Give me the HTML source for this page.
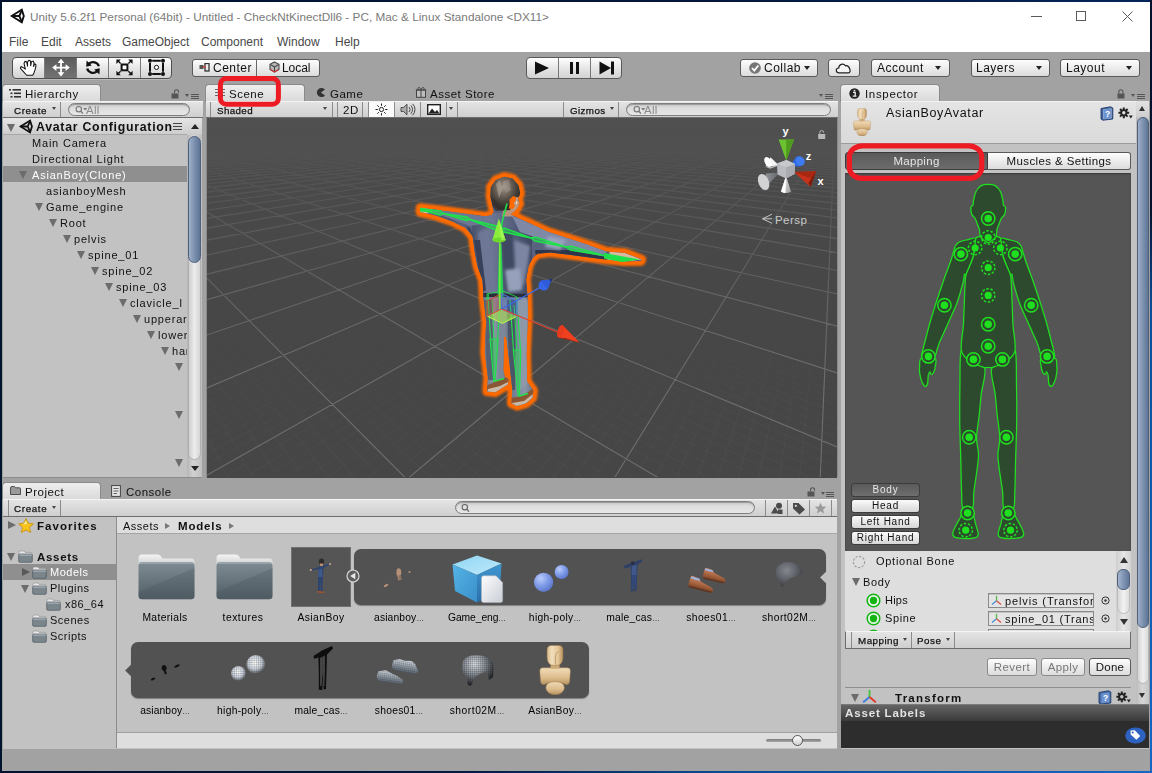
<!DOCTYPE html>
<html>
<head>
<meta charset="utf-8">
<title>Unity</title>
<style>
*{box-sizing:border-box;margin:0;padding:0}
html,body{width:1152px;height:773px;overflow:hidden}
body{font-family:"Liberation Sans",sans-serif;font-size:12px;color:#111;background:linear-gradient(90deg,#02122f 0%,#03183d 40%,#0d4a99 80%,#1666c4 100%);position:relative}
.abs{position:absolute}
.t{position:absolute;white-space:nowrap;line-height:14px;letter-spacing:0.55px}
#win{position:absolute;left:0;top:0;width:1152px;height:773px;background:#a2a2a2;overflow:hidden}
#titlebar{position:absolute;left:0;top:0;width:1152px;height:30px;background:#fff}
#menubar{position:absolute;left:0;top:30px;width:1152px;height:22px;background:#fff}
.menu{position:absolute;top:35px;font-size:12px;color:#484848;white-space:nowrap}
/* generic unity button */
.btn{position:absolute;border:1px solid #5a5a5a;border-radius:3px;background:linear-gradient(#fdfdfd,#dcdcdc);}
.tab{position:absolute;height:17px;border:1px solid #8a8a8a;border-bottom:none;border-radius:4px 4px 0 0;background:linear-gradient(#eeeeee,#d9d9d9)}
.tbar{position:absolute;height:17px;background:linear-gradient(#e4e4e4,#cfcfcf);border-top:1px solid #f4f4f4;border-bottom:1px solid #6d6d6d}
.panel{position:absolute;background:#c2c2c2}
.vsep{position:absolute;width:1px;background:#8b8b8b;top:0;height:15px}

.tg{position:absolute;left:12px;top:57px;width:160px;height:22px;border:1px solid #4f4f4f;border-radius:4px;background:linear-gradient(#ffffff,#e9e9e9 45%,#d2d2d2);overflow:hidden;box-shadow:0 1px 0 rgba(255,255,255,.25)}
.tg .d{position:absolute;top:0;width:1px;height:20px;background:#7a7a7a}
.tg svg{position:absolute;top:0}
.bt{position:absolute;font-size:12px;letter-spacing:0.5px;white-space:nowrap;line-height:14px;color:#111}
.dd{position:absolute;width:0;height:0;border-left:3px solid transparent;border-right:3px solid transparent;border-top:4px solid #222}

.tabt{position:absolute;font-size:11.5px;letter-spacing:0.5px;white-space:nowrap;line-height:14px;color:#111}
.row{position:absolute;left:0;height:16px;font-size:11px;letter-spacing:0.8px;white-space:nowrap;line-height:18px;color:#111}
.ar{position:absolute;width:0;height:0;border-left:4.5px solid transparent;border-right:4.5px solid transparent;border-top:8px solid #6c6c6c}
.arr{position:absolute;width:0;height:0;border-top:4.5px solid transparent;border-bottom:4.5px solid transparent;border-left:8px solid #6c6c6c}
.lock{position:absolute}
.sfield{position:absolute;height:13px;border-radius:7px;border:1px solid #7e7e7e;background:linear-gradient(#c9c9c9,#dedede 40%,#e6e6e6);box-shadow:inset 0 1px 1px rgba(0,0,0,.25)}
/*PROJCSS*/
.prow{position:absolute;height:16px;font-size:11px;letter-spacing:0.5px;white-space:nowrap;line-height:17px;color:#111}
.lbl{position:absolute;width:78px;text-align:center;font-size:10.3px;letter-spacing:0.95px;white-space:nowrap;line-height:13px;color:#000}
.fold{position:absolute;width:15px;height:13px}
/*/PROJCSS*//*INSPCSS*/
.ibtn{position:absolute;height:18px;border:1px solid #5a5a5a;background:linear-gradient(#fdfdfd,#dcdcdc);font-size:11.5px;line-height:16px;text-align:center;white-space:nowrap;color:#111}
.sbtn{position:absolute;left:851px;width:69px;height:14.3px;border:1px solid #3c3c3c;border-radius:3px;background:linear-gradient(#fbfbfb,#d6d6d6);font-size:10px;line-height:12.5px;text-align:center;white-space:nowrap;color:#111;letter-spacing:.75px}
.irow{position:absolute;font-size:11px;letter-spacing:0.75px;white-space:nowrap;line-height:14px;color:#111}
/*/INSPCSS*//*GRAY*/.bt,.prow,.tabt,.row,.lbl,.irow,.ibtn,.sbtn,#iname{will-change:transform}
</style>
</head>
<body>
<div id="win">
  <div id="titlebar"></div>
  <div id="menubar"></div>


  <!-- TITLE BAR -->
  <svg class="abs" style="left:10px;top:8px" width="16" height="16" viewBox="0 0 16 16"><g fill="none" stroke="#111" stroke-width="1.9" stroke-linejoin="miter"><path d="M1.6 8 L11.8 1.6 L13.8 8 L11.8 14.4 Z"/><path d="M1.6 8 H9.3 M9.3 8 L12 1.8 M9.3 8 L12 14.2"/></g></svg>
  <div class="abs" id="title" style="left:30px;top:9px;font-size:11.75px;color:#7a7a7a;white-space:nowrap;line-height:15px;letter-spacing:0.02px">Unity 5.6.2f1 Personal (64bit) - Untitled - CheckNtKinectDll6 - PC, Mac &amp; Linux Standalone &lt;DX11&gt;</div>
  <div class="abs" style="left:1031px;top:16px;width:11px;height:1px;background:#5a5a5a"></div>
  <div class="abs" style="left:1076px;top:11px;width:10px;height:10px;border:1px solid #5a5a5a"></div>
  <svg class="abs" style="left:1122px;top:11px" width="11" height="11" viewBox="0 0 11 11"><path d="M0.5 0.5 L10.5 10.5 M10.5 0.5 L0.5 10.5" stroke="#5a5a5a" stroke-width="1" fill="none"/></svg>
  <!-- MENU -->
  <div class="menu" id="m1" style="left:9px">File</div>
  <div class="menu" id="m2" style="left:41px">Edit</div>
  <div class="menu" id="m3" style="left:75px">Assets</div>
  <div class="menu" id="m4" style="left:122px">GameObject</div>
  <div class="menu" id="m5" style="left:201px">Component</div>
  <div class="menu" id="m6" style="left:277px">Window</div>
  <div class="menu" id="m7" style="left:335px">Help</div>


  <div id="unity" style="position:absolute;left:0;top:0;width:1152px;height:773px;transform:translateZ(0)">
  <!-- MAIN TOOLBAR -->
  <div class="tg">
    <div class="abs" style="left:32px;top:0;width:32px;height:20px;background:linear-gradient(#5c5c5c,#737373)"></div>
    <div class="d" style="left:31px"></div><div class="d" style="left:63px"></div><div class="d" style="left:95px"></div><div class="d" style="left:127px"></div>
    <!-- hand -->
    <svg style="left:7px" width="18" height="20" viewBox="0 0 18 20"><path d="M6.66 17.27 L3.19 13.36 L0.35 10.32 L1.02 8.59 L3.63 9.89 L5.36 11.19 L4.06 5.55 L4.93 3.38 L6.66 3.81 L7.53 8.15 L7.53 4.25 L8.83 2.25 L10.57 2.94 L10.74 7.72 L11.44 3.81 L13.17 3.12 L14.04 4.68 L13.61 8.59 L14.48 5.98 L15.78 6.24 L15.95 8.15 L15.08 11.63 L14.04 14.66 L12.74 17.27 Z" fill="#fff" stroke="#111" stroke-width="1.05" stroke-linejoin="round"/></svg>
    <!-- move -->
    <svg style="left:39px" width="18" height="20" viewBox="0 0 18 20"><path d="M9 0.8 L12.4 5 H9.9 V8.7 H13.6 V6.2 L17.8 9.6 L13.6 13 V10.5 H9.9 V14.2 H12.4 L9 18.4 L5.6 14.2 H8.1 V10.5 H4.4 V13 L0.2 9.6 L4.4 6.2 V8.7 H8.1 V5 H5.6 Z" fill="#fff"/></svg>
    <!-- rotate -->
    <svg style="left:71px" width="18" height="20" viewBox="0 0 18 20"><g transform="translate(18 0) scale(-1 1)"><g fill="none" stroke="#111" stroke-width="2.3"><path d="M3.2 8.2 A5.9 5.3 0 0 1 13 5.6"/><path d="M14.8 10.6 A5.9 5.3 0 0 1 5 13.4"/></g><path d="M10.2 7.6 L15.4 2.4 L15.8 8.8 Z M7.8 11.4 L2.6 16.6 L2.2 10.2 Z" fill="#111"/></g></svg>
    <!-- scale -->
    <svg style="left:103px" width="18" height="20" viewBox="0 0 18 20"><rect x="5.6" y="6.5" width="5.8" height="5.8" fill="#fff" stroke="#111" stroke-width="2"/><g stroke="#111" stroke-width="1.4" fill="none"><path d="M4.6 5.5 L1.6 2.6 M12.4 5.5 L15.4 2.6 M4.6 13.3 L1.6 16.2 M12.4 13.3 L15.4 16.2"/></g><path d="M0.4 1.6 H4.8 L0.4 6 Z M16.6 1.6 H12.2 L16.6 6 Z M0.4 17.2 H4.8 L0.4 12.8 Z M16.6 17.2 H12.2 L16.6 12.8 Z" fill="#111"/></svg>
    <!-- rect -->
    <svg style="left:135px" width="18" height="20" viewBox="0 0 18 20"><g stroke="#111" stroke-width="2" fill="none"><path d="M4.2 2.8 H12.8 M4.2 16 H12.8 M2 5 V13.8 M15 5 V13.8"/></g><g fill="#111"><circle cx="2" cy="2.8" r="2"/><circle cx="15" cy="2.8" r="2"/><circle cx="2" cy="16" r="2"/><circle cx="15" cy="16" r="2"/></g><circle cx="8.5" cy="9.4" r="2.1" fill="#fff" stroke="#111" stroke-width="1"/></svg>
  </div>
  <!-- Center / Local -->
  <div class="btn" style="left:192px;top:59px;width:128px;height:18px"></div>
  <div class="abs" style="left:256px;top:60px;width:1px;height:16px;background:#666"></div>
  <svg class="abs" style="left:199px;top:63px" width="12" height="9" viewBox="0 0 12 9"><rect x="0.5" y="2" width="4" height="4" fill="#555"/><rect x="6" y="0.5" width="4" height="7.5" fill="none" stroke="#333" stroke-width="1.3"/><path d="M4 4 h3" stroke="#d33" stroke-width="1.2"/></svg>
  <div class="bt" id="bcenter" style="left:213px;top:61px">Center</div>
  <svg class="abs" style="left:268.5px;top:61px" width="11" height="12" viewBox="0 0 13 14"><path d="M6.5 1 L11.8 3.8 V10 L6.5 13 L1.2 10 V3.8 Z" fill="#b8b8b8" stroke="#4a4a4a" stroke-width="1.3"/><path d="M1.5 4 L6.5 6.8 L11.5 4 M6.5 6.8 V12.5" stroke="#444" stroke-width="1.2" fill="none"/><path d="M2 10.2 L6.5 12.8 L11 10.2" stroke="#d33" stroke-width="1.2" fill="none"/></svg>
  <div class="bt" id="blocal" style="left:282.3px;top:61px;letter-spacing:-0.06px">Local</div>
  <!-- Play controls -->
  <div class="btn" style="left:526px;top:57px;width:96px;height:22px;border-radius:4px;background:linear-gradient(#ffffff,#e9e9e9 45%,#d2d2d2)"></div>
  <div class="abs" style="left:558px;top:58px;width:1px;height:20px;background:#777"></div>
  <div class="abs" style="left:590px;top:58px;width:1px;height:20px;background:#777"></div>
  <svg class="abs" style="left:534px;top:61px" width="16" height="14" viewBox="0 0 16 14"><path d="M1 0.5 L15 7 L1 13.5 Z" fill="#111"/></svg>
  <div class="abs" style="left:570px;top:62px;width:3px;height:12px;background:#111"></div>
  <div class="abs" style="left:576px;top:62px;width:3px;height:12px;background:#111"></div>
  <svg class="abs" style="left:599px;top:61px" width="16" height="14" viewBox="0 0 16 14"><path d="M0.5 0.5 L12 7 L0.5 13.5 Z" fill="#111"/><rect x="12" y="0.5" width="3" height="13" fill="#111"/></svg>
  <!-- Right toolbar -->
  <div class="btn" style="left:740px;top:59px;width:78px;height:18px"></div>
  <svg class="abs" style="left:749px;top:62px" width="12" height="12" viewBox="0 0 12 12"><circle cx="6" cy="6" r="5.8" fill="#777"/><path d="M3 6 L5.3 8.5 L9.3 3.5" stroke="#fff" stroke-width="1.8" fill="none"/></svg>
  <div class="bt" id="bcollab" style="left:764px;top:61px">Collab</div>
  <div class="dd" style="left:804px;top:66px"></div>
  <div class="btn" style="left:828px;top:59px;width:32px;height:18px"></div>
  <svg class="abs" style="left:835px;top:62px" width="18" height="12" viewBox="0 0 18 12"><path d="M4.2 10.8 C0.4 10.8 0.4 6 3.8 6 C3.6 2.6 8.2 0.4 10.6 3.8 C14.4 2.8 17 10.8 13.4 10.8 Z" fill="#f4f4f4" stroke="#222" stroke-width="1.2"/></svg>
  <div class="btn" style="left:871px;top:59px;width:79px;height:18px"></div>
  <div class="bt" id="baccount" style="left:877px;top:61px">Account</div>
  <div class="dd" style="left:935px;top:66px"></div>
  <div class="btn" style="left:971px;top:59px;width:79px;height:18px"></div>
  <div class="bt" id="blayers" style="left:976px;top:61px">Layers</div>
  <div class="dd" style="left:1036px;top:66px"></div>
  <div class="btn" style="left:1060px;top:59px;width:80px;height:18px"></div>
  <div class="bt" id="blayout" style="left:1066px;top:61px">Layout</div>
  <div class="dd" style="left:1126px;top:66px"></div>

  <!-- Hierarchy panel -->
  <div class="panel" id="hier" style="left:3px;top:101px;width:199px;height:377px;border-bottom:1px solid #8c8c8c"></div>

  <!-- HIERARCHY TAB -->
  <div class="tab" style="left:2px;top:84px;width:99px;height:18px"></div>
  <svg class="abs" style="left:9px;top:89px" width="12" height="9" viewBox="0 0 12 9"><g fill="#333"><rect x="0" y="0" width="2" height="1.6"/><rect x="3.5" y="0" width="8.5" height="1.6"/><rect x="1.5" y="3.5" width="2" height="1.6"/><rect x="5" y="3.5" width="7" height="1.6"/><rect x="1.5" y="7" width="2" height="1.6"/><rect x="5" y="7" width="7" height="1.6"/></g></svg>
  <div class="tabt" id="thier" style="left:25px;top:87px">Hierarchy</div>
  <svg class="lock" style="left:171px;top:89px" width="9" height="10" viewBox="0 0 9 10"><rect x="0.5" y="4.5" width="7" height="5" fill="#555"/><path d="M3.5 4.5 V2.8 A2 2 0 0 1 7.6 2.8 V3.6" stroke="#555" stroke-width="1.1" fill="none"/></svg>
  <div class="dd" style="left:185px;top:94px;border-top-color:#555;border-left-width:2.5px;border-right-width:2.5px;border-top-width:3px"></div>
  <div class="abs" style="left:191px;top:94px;width:8px;height:5px;border-top:1px solid #555;border-bottom:1px solid #555"><div style="margin-top:1px;height:1px;background:#555"></div></div>
  <div class="abs" id="hierwrap" style="left:3px;top:101px;width:200px;height:376px;overflow:hidden">
    <div class="tbar" style="left:0;top:0;width:200px"></div>
    <div class="bt" style="left:11px;top:2.5px;font-size:9.8px;letter-spacing:0.60px;-webkit-text-stroke:.25px #111">Create</div>
    <div class="dd" style="left:49px;top:6px;border-left-width:2.5px;border-right-width:2.5px;border-top-width:3.5px;border-top-color:#444"></div>
    <div class="vsep" style="left:57px;top:1px"></div>
    <div class="sfield" style="left:65px;top:2px;width:122px"></div>
    <svg class="abs" style="left:72px;top:4px" width="14" height="10" viewBox="0 0 14 10"><circle cx="3.8" cy="4.2" r="2.7" fill="none" stroke="#777" stroke-width="1.1"/><path d="M5.8 6.2 L8 8.6" stroke="#777" stroke-width="1.3"/><path d="M8.2 3 h4 l-2 2.6z" fill="#777"/></svg>
    <div class="bt" style="left:83px;top:1.5px;color:#8a8a8a;font-size:11.5px;letter-spacing:.3px">All</div>
  </div>
  <div class="abs" id="hiertree" style="left:3px;top:0;width:184px;height:477px;overflow:hidden">
    <div class="abs" style="left:0;top:118px;width:184px;height:17px;background:linear-gradient(#e6e6e6,#cdcdcd);border-bottom:1px solid #a9a9a9"></div>
    <div class="ar" style="left:4px;top:124px"></div>
    <svg class="abs" style="left:16px;top:119px" width="15" height="15" viewBox="0 0 16 16"><g fill="none" stroke="#111" stroke-width="1.9" stroke-linejoin="miter"><path d="M1.6 8 L11.8 1.6 L13.8 8 L11.8 14.4 Z"/><path d="M1.6 8 H9.3 M9.3 8 L12 1.8 M9.3 8 L12 14.2"/></g></svg>
    <div class="row" id="hrA" style="left:33px;top:118px;font-weight:bold;font-size:12.3px;letter-spacing:0.75px;width:136px;overflow:hidden">Avatar Configuration</div>
    <div class="abs" style="left:170px;top:123px;width:9px;height:7px;border-top:1px solid #444;border-bottom:1px solid #444"><div style="margin-top:2px;height:1px;background:#444"></div></div>
<div class="row" id="hrow0" style="left:29px;top:134px;">Main Camera</div>
<div class="row" id="hrow1" style="left:29px;top:150px;">Directional Light</div>
<div class="abs" style="left:0;top:166px;width:184px;height:16px;background:#8f8f8f"></div><div class="ar" style="left:16px;top:171px"></div><div class="row" id="hrow2" style="left:29px;top:166px;color:#fff">AsianBoy(Clone)</div>
<div class="row" id="hrow3" style="left:43px;top:182px;">asianboyMesh</div>
<div class="ar" style="left:32px;top:203px"></div><div class="row" id="hrow4" style="left:43px;top:198px;">Game_engine</div>
<div class="ar" style="left:46px;top:219px"></div><div class="row" id="hrow5" style="left:57px;top:214px;">Root</div>
<div class="ar" style="left:60px;top:235px"></div><div class="row" id="hrow6" style="left:71px;top:230px;">pelvis</div>
<div class="ar" style="left:74px;top:251px"></div><div class="row" id="hrow7" style="left:85px;top:246px;">spine_01</div>
<div class="ar" style="left:88px;top:267px"></div><div class="row" id="hrow8" style="left:99px;top:262px;">spine_02</div>
<div class="ar" style="left:102px;top:283px"></div><div class="row" id="hrow9" style="left:113px;top:278px;">spine_03</div>
<div class="ar" style="left:116px;top:299px"></div><div class="row" id="hrow10" style="left:127px;top:294px;">clavicle_l</div>
<div class="ar" style="left:130px;top:315px"></div><div class="row" id="hrow11" style="left:141px;top:310px;">upperarm_l</div>
<div class="ar" style="left:144px;top:331px"></div><div class="row" id="hrow12" style="left:155px;top:326px;">lowerarm_l</div>
<div class="ar" style="left:158px;top:347px"></div><div class="row" id="hrow13" style="left:169px;top:342px;">hand_l</div>
<div class="ar" style="left:172px;top:363px"></div><div class="ar" style="left:172px;top:411px"></div><div class="ar" style="left:172px;top:459px"></div>
  </div>
  <!-- hierarchy scrollbar -->
  <div class="abs" style="left:187px;top:118px;width:15px;height:359px;background:linear-gradient(90deg,#b5b5b5,#d2d2d2 40%,#bfbfbf)"></div>
  <div class="abs" style="left:187px;top:118px;width:15px;height:17px;background:linear-gradient(#e4e4e4,#cbcbcb)"></div>
  <div class="abs" style="left:190.5px;top:123.5px;width:0;height:0;border-left:4px solid transparent;border-right:4px solid transparent;border-bottom:5.5px solid #222"></div>
  <div class="abs" style="left:188px;top:136px;width:13px;height:324px;border-radius:7px;background:linear-gradient(90deg,#cfcfcf,#ececec 50%,#d5d5d5);border:1px solid #b0b0b0"></div>
  <div class="abs" style="left:188px;top:136px;width:13px;height:127px;border-radius:7px;background:linear-gradient(90deg,#9fb0c8,#7f93b1 45%,#5f7595);border:1px solid #4e607c"></div>
  <div class="abs" style="left:190.5px;top:466px;width:0;height:0;border-left:4px solid transparent;border-right:4px solid transparent;border-top:5.5px solid #222"></div>

  <!-- Scene panel -->
  <div class="panel" id="scene" style="left:206px;top:101px;width:632px;height:376px;background:#8a8a8a"></div>
  <div class="abs" id="sv" style="left:207px;top:118px;width:630px;height:359.5px;overflow:hidden;background:#464646">
<!--GRID--><svg class="abs" style="left:0;top:0" width="630" height="359" viewBox="0 0 630 359"><defs><linearGradient id="fog" x1="0" y1="0" x2="0" y2="1"><stop offset="0" stop-color="#505050" stop-opacity="1"/><stop offset="0.045" stop-color="#4f4f4f" stop-opacity="1"/><stop offset="0.12" stop-color="#4c4c4c" stop-opacity=".85"/><stop offset="0.3" stop-color="#494949" stop-opacity=".55"/><stop offset="0.5" stop-color="#474747" stop-opacity=".25"/><stop offset="0.75" stop-color="#464646" stop-opacity="0"/></linearGradient><linearGradient id="mfog" x1="0" y1="0" x2="0" y2="1"><stop offset="0" stop-color="#484848" stop-opacity="1"/><stop offset="0.5" stop-color="#474747" stop-opacity="1"/><stop offset="0.95" stop-color="#464646" stop-opacity="0"/></linearGradient></defs><rect width="630" height="359" fill="#464646"/><path d="M628.3 2.4L1008.8 365.0M628.3 2.4L987.9 365.0M628.3 2.4L967.1 365.0M628.3 2.4L946.3 365.0M628.3 2.4L925.5 365.0M628.3 2.4L904.7 365.0M628.3 2.4L883.9 365.0M628.3 2.4L863.1 365.0M628.3 2.4L842.2 365.0M628.3 2.4L800.6 365.0M628.3 2.4L779.8 365.0M628.3 2.4L758.9 365.0M628.3 2.4L738.1 365.0M628.3 2.4L717.2 365.0M628.3 2.4L696.4 365.0M628.3 2.4L675.6 365.0M628.3 2.4L654.7 365.0M628.3 2.4L633.9 365.0M628.3 2.4L592.1 365.0M628.3 2.4L571.3 365.0M628.3 2.4L550.4 365.0M628.3 2.4L529.6 365.0M628.3 2.4L508.7 365.0M628.3 2.4L487.8 365.0M628.3 2.4L467.0 365.0M628.3 2.4L446.1 365.0M628.3 2.4L425.2 365.0M628.3 2.4L383.4 365.0M628.3 2.4L362.6 365.0M628.3 2.4L341.7 365.0M628.3 2.4L320.8 365.0M628.3 2.4L299.9 365.0M628.3 2.4L279.0 365.0M628.3 2.4L258.1 365.0M628.3 2.4L237.2 365.0M628.3 2.4L216.3 365.0M628.3 2.4L174.5 365.0M628.3 2.4L153.5 365.0M628.3 2.4L132.6 365.0M628.3 2.4L111.7 365.0M628.3 2.4L90.8 365.0M628.3 2.4L69.9 365.0M628.3 2.4L48.9 365.0M628.3 2.4L28.0 365.0M628.3 2.4L7.1 365.0M628.3 2.4L-34.8 365.0M628.3 2.4L-55.7 365.0M628.3 2.4L-76.7 365.0M628.3 2.4L-97.6 365.0M628.3 2.4L-118.6 365.0M628.3 2.4L-139.5 365.0M628.3 2.4L-160.5 365.0M628.3 2.4L-181.4 365.0M628.3 2.4L-202.4 365.0M628.3 2.4L-244.3 365.0M628.3 2.4L-265.3 365.0M628.3 2.4L-286.3 365.0M628.3 2.4L-307.2 365.0M628.3 2.4L-328.2 365.0M628.3 2.4L-349.2 365.0M628.3 2.4L-370.2 365.0M628.3 2.4L-391.1 365.0M628.3 2.4L-412.1 365.0M628.3 2.4L-454.1 365.0M628.3 2.4L-475.1 365.0M628.3 2.4L-496.1 365.0M628.3 2.4L-517.1 365.0M628.3 2.4L-538.1 365.0M628.3 2.4L-559.1 365.0M628.3 2.4L-580.1 365.0M628.3 2.4L-601.1 365.0M628.3 2.4L-622.1 365.0M628.3 2.4L-664.2 365.0M628.3 2.4L-685.2 365.0M628.3 2.4L-706.2 365.0M628.3 2.4L-727.2 365.0M628.3 2.4L-748.3 365.0M628.3 2.4L-769.3 365.0M628.3 2.4L-790.3 365.0M628.3 2.4L-811.4 365.0M628.3 2.4L-832.4 365.0M628.3 2.4L-874.5 365.0M628.3 2.4L-895.6 365.0M628.3 2.4L-916.6 365.0M628.3 2.4L-937.7 365.0M628.3 2.4L-958.7 365.0M628.3 2.4L-979.8 365.0M628.3 2.4L-1000.9 365.0M628.3 2.4L-1021.9 365.0M628.3 2.4L-1043.0 365.0M628.3 2.4L-1085.1 365.0M628.3 2.4L-1106.2 365.0M628.3 2.4L-1127.3 365.0M628.3 2.4L-1148.4 365.0M628.3 2.4L-1169.5 365.0M628.3 2.4L-1190.5 365.0M628.3 2.4L-1211.6 365.0M628.3 2.4L-1232.7 365.0M628.3 2.4L-1253.8 365.0M-157.7 1.5L-2.2 365.0M-157.7 1.5L23.5 365.0M-157.7 1.5L49.3 365.0M-157.7 1.5L75.0 365.0M-157.7 1.5L100.7 365.0M-157.7 1.5L126.4 365.0M-157.7 1.5L152.1 365.0M-157.7 1.5L177.8 365.0M-157.7 1.5L229.2 365.0M-157.7 1.5L254.9 365.0M-157.7 1.5L280.6 365.0M-157.7 1.5L306.3 365.0M-157.7 1.5L332.0 365.0M-157.7 1.5L357.6 365.0M-157.7 1.5L383.3 365.0M-157.7 1.5L409.0 365.0M-157.7 1.5L434.7 365.0M-157.7 1.5L486.0 365.0M-157.7 1.5L511.6 365.0M-157.7 1.5L537.3 365.0M-157.7 1.5L562.9 365.0M-157.7 1.5L588.6 365.0M-157.7 1.5L614.2 365.0M-157.7 1.5L639.8 365.0M-157.7 1.5L665.4 365.0M-157.7 1.5L691.1 365.0M-157.7 1.5L742.3 365.0M-157.7 1.5L767.9 365.0M-157.7 1.5L793.5 365.0M-157.7 1.5L819.1 365.0M-157.7 1.5L844.7 365.0M-157.7 1.5L870.3 365.0M-157.7 1.5L895.9 365.0M-157.7 1.5L921.5 365.0M-157.7 1.5L947.1 365.0M-157.7 1.5L998.2 365.0M-157.7 1.5L1023.8 365.0M-157.7 1.5L1049.4 365.0M-157.7 1.5L1074.9 365.0M-157.7 1.5L1100.5 365.0M-157.7 1.5L1126.1 365.0M-157.7 1.5L1151.6 365.0M-157.7 1.5L1177.1 365.0M-157.7 1.5L1202.7 365.0M-157.7 1.5L1253.8 365.0M-157.7 1.5L1279.3 365.0M-157.7 1.5L1304.8 365.0M-157.7 1.5L1330.3 365.0M-157.7 1.5L1355.9 365.0M-157.7 1.5L1381.4 365.0M-157.7 1.5L1406.9 365.0M-157.7 1.5L1432.4 365.0M-157.7 1.5L1457.9 365.0M-157.7 1.5L1508.9 365.0M-157.7 1.5L1534.4 365.0M-157.7 1.5L1559.9 365.0M-157.7 1.5L1585.3 365.0M-157.7 1.5L1610.8 365.0M-157.7 1.5L1636.3 365.0M-157.7 1.5L1661.8 365.0M-157.7 1.5L1687.2 365.0M-157.7 1.5L1712.7 365.0M-157.7 1.5L1763.6 365.0M-157.7 1.5L1789.0 365.0M-157.7 1.5L1814.5 365.0M-157.7 1.5L1839.9 365.0M-157.7 1.5L1865.4 365.0M-157.7 1.5L1890.8 365.0M-157.7 1.5L1916.2 365.0M-157.7 1.5L1941.7 365.0M-157.7 1.5L1967.1 365.0M-157.7 1.5L2017.9 365.0M-157.7 1.5L2043.3 365.0M-157.7 1.5L2068.7 365.0M-157.7 1.5L2094.1 365.0M-157.7 1.5L2119.5 365.0M-157.7 1.5L2144.9 365.0M-157.7 1.5L2170.3 365.0M-157.7 1.5L2195.7 365.0M-157.7 1.5L2221.1 365.0" stroke="#fff" stroke-opacity=".03" stroke-width="1" fill="none"/><rect width="630" height="359" fill="url(#mfog)"/><path d="M628.3 2.4L1652.4 365.0M628.3 2.4L1445.0 365.0M628.3 2.4L1237.4 365.0M628.3 2.4L1029.6 365.0M628.3 2.4L821.4 365.0M628.3 2.4L613.0 365.0M628.3 2.4L404.3 365.0M628.3 2.4L195.4 365.0M628.3 2.4L-13.9 365.0M628.3 2.4L-223.4 365.0M628.3 2.4L-433.1 365.0M628.3 2.4L-643.2 365.0M628.3 2.4L-853.5 365.0M628.3 2.4L-1064.1 365.0M628.3 2.4L-1274.9 365.0M628.3 2.4L-1486.1 365.0M628.3 2.4L-1697.5 365.0M628.3 2.4L-1909.2 365.0M628.3 2.4L-2121.1 365.0M628.3 2.4L-2333.4 365.0M628.3 2.4L-2545.9 365.0M628.3 2.4L-2758.7 365.0M628.3 2.4L-2971.7 365.0M628.3 2.4L-3185.1 365.0M628.3 2.4L-3398.7 365.0M628.3 2.4L-3612.6 365.0M628.3 2.4L-3826.8 365.0M628.3 2.4L-4041.3 365.0M628.3 2.4L-4256.1 365.0M628.3 2.4L-4471.1 365.0M628.3 2.4L-4686.4 365.0M628.3 2.4L-4902.1 365.0M628.3 2.4L-5117.9 365.0M628.3 2.4L-5207.0 357.3M628.3 2.4L-5207.0 344.8M628.3 2.4L-5207.0 333.2M628.3 2.4L-5207.0 322.4M628.3 2.4L-5207.0 312.2M628.3 2.4L-5207.0 302.6M628.3 2.4L-5207.0 293.6M628.3 2.4L-5207.0 285.1M628.3 2.4L-5207.0 277.1M628.3 2.4L-5207.0 269.5M628.3 2.4L-5207.0 262.3M628.3 2.4L-5207.0 255.5M628.3 2.4L-5207.0 249.0M628.3 2.4L-5207.0 242.9M628.3 2.4L-5207.0 237.0M628.3 2.4L-5207.0 231.4M628.3 2.4L-5207.0 226.1M628.3 2.4L-5207.0 220.9M628.3 2.4L-5207.0 216.1M628.3 2.4L-5207.0 211.4M628.3 2.4L-5207.0 206.9M628.3 2.4L-5207.0 202.6M628.3 2.4L-5207.0 198.5M628.3 2.4L-5207.0 194.5M628.3 2.4L-5207.0 190.7M628.3 2.4L-5207.0 187.0M628.3 2.4L-5207.0 183.5M628.3 2.4L-5207.0 180.1M628.3 2.4L-5207.0 176.8M628.3 2.4L-5207.0 173.6M628.3 2.4L-5207.0 170.6M628.3 2.4L-5207.0 167.6M628.3 2.4L-5207.0 164.7M628.3 2.4L-5207.0 162.0M628.3 2.4L-5207.0 159.3M628.3 2.4L-5207.0 156.7M628.3 2.4L-5207.0 154.2M628.3 2.4L-5207.0 151.8M628.3 2.4L-5207.0 149.4M628.3 2.4L-5207.0 147.1M628.3 2.4L-5207.0 144.9M628.3 2.4L-5207.0 142.7M628.3 2.4L-5207.0 140.6M-157.7 1.5L203.5 365.0M-157.7 1.5L460.3 365.0M-157.7 1.5L716.7 365.0M-157.7 1.5L972.7 365.0M-157.7 1.5L1228.2 365.0M-157.7 1.5L1483.4 365.0M-157.7 1.5L1738.1 365.0M-157.7 1.5L1992.5 365.0M-157.7 1.5L2246.4 365.0M-157.7 1.5L2500.0 365.0M-157.7 1.5L2753.1 365.0M-157.7 1.5L3005.9 365.0M-157.7 1.5L3258.2 365.0M-157.7 1.5L3510.2 365.0M-157.7 1.5L3761.7 365.0M-157.7 1.5L4012.9 365.0M-157.7 1.5L4263.6 365.0M-157.7 1.5L4514.0 365.0M-157.7 1.5L4764.0 365.0M-157.7 1.5L4793.0 349.5M-157.7 1.5L4793.0 333.5M-157.7 1.5L4793.0 318.9M-157.7 1.5L4793.0 305.6M-157.7 1.5L4793.0 293.4M-157.7 1.5L4793.0 282.1M-157.7 1.5L4793.0 271.7M-157.7 1.5L4793.0 262.0M-157.7 1.5L4793.0 253.1M-157.7 1.5L4793.0 244.7M-157.7 1.5L4793.0 236.9M-157.7 1.5L4793.0 229.6M-157.7 1.5L4793.0 222.7M-157.7 1.5L4793.0 216.2M-157.7 1.5L4793.0 210.2M-157.7 1.5L4793.0 204.4M-157.7 1.5L4793.0 199.0M-157.7 1.5L4793.0 193.9M-157.7 1.5L4793.0 189.0M-157.7 1.5L4793.0 184.4M-157.7 1.5L4793.0 180.0M-157.7 1.5L4793.0 175.8M-157.7 1.5L4793.0 171.8M-157.7 1.5L4793.0 168.1M-157.7 1.5L4793.0 164.4M-157.7 1.5L4793.0 161.0M-157.7 1.5L4793.0 157.6M-157.7 1.5L4793.0 154.5M-157.7 1.5L4793.0 151.4M-157.7 1.5L4793.0 148.5M-157.7 1.5L4793.0 145.7M-157.7 1.5L4793.0 143.0M-157.7 1.5L4793.0 140.4M-157.7 1.5L4793.0 137.9M-157.7 1.5L4793.0 135.5M-157.7 1.5L4793.0 133.2M-157.7 1.5L4793.0 131.0M-157.7 1.5L4793.0 128.8M-157.7 1.5L4793.0 126.7M-157.7 1.5L4793.0 124.7M-157.7 1.5L4793.0 122.8M-157.7 1.5L4793.0 120.9M-157.7 1.5L4793.0 119.0M-157.7 1.5L4793.0 117.3M-157.7 1.5L4793.0 115.6M-157.7 1.5L4793.0 113.9M-157.7 1.5L4793.0 112.3M-157.7 1.5L4793.0 110.7M-157.7 1.5L4793.0 109.2M-157.7 1.5L4793.0 107.8M-157.7 1.5L4793.0 106.3M-157.7 1.5L4793.0 104.9M-157.7 1.5L4793.0 103.6" stroke="#fff" stroke-opacity=".22" stroke-width="1.1" fill="none"/><rect width="630" height="359" fill="url(#fog)"/></svg><!--/GRID-->
<!--CHAR--><svg class="abs" style="left:0;top:0" width="630" height="359" viewBox="0 0 630 359"><defs>
<filter id="glow" x="-10%" y="-10%" width="120%" height="120%"><feGaussianBlur stdDeviation="0.9"/></filter>
<filter id="soft" x="-10%" y="-10%" width="120%" height="120%"><feGaussianBlur stdDeviation="1.6"/></filter>
<filter id="soft1" x="-10%" y="-10%" width="120%" height="120%"><feGaussianBlur stdDeviation="0.7"/></filter>
<clipPath id="body"><path d="M213.4 89.9 L228.2 91.6 L253.5 95.0 L277.0 98.3 L284.5 97.5 L286.6 94.1 L285.2 87.4 L283.4 79.0 L283.8 68.9 L288.8 62.1 L297.2 58.8 L305.6 60.5 L311.5 67.2 L313.2 75.6 L310.9 80.6 L312.4 85.7 L309.8 90.7 L306.5 94.1 L303.9 96.6 L312.4 100.8 L324.1 105.9 L340.7 113.7 L361.0 120.3 L381.4 126.9 L399.1 133.4 L418.1 135.0 L434.4 141.3 L434.0 143.0 L418.1 143.4 L399.1 141.6 L388.2 140.2 L363.8 137.1 L343.4 134.4 L330.4 135.8 L325.4 140.5 L321.6 148.0 L319.1 161.4 L320.4 177.0 L320.9 198.2 L319.3 234.5 L320.0 263.4 L326.3 272.5 L325.4 279.8 L319.1 285.2 L310.0 287.9 L304.6 285.2 L305.3 270.7 L303.2 252.0 L299.2 219.0 L297.0 219.0 L296.2 252.0 L297.8 259.0 L301.3 260.7 L301.0 266.2 L288.3 274.3 L280.1 273.4 L280.1 270.7 L281.0 259.8 L277.8 234.5 L279.2 203.7 L276.5 180.0 L275.6 162.0 L270.3 148.0 L267.8 134.5 L265.6 118.5 L258.5 110.1 L245.1 103.4 L228.2 97.5 L213.4 94.1 Z"/></clipPath>
<radialGradient id="hair" cx="0.45" cy="0.32" r="0.6"><stop offset="0" stop-color="#a89e92"/><stop offset="0.3" stop-color="#7a6f64"/><stop offset="0.7" stop-color="#4a443e"/><stop offset="1" stop-color="#2e2b28"/></radialGradient>
<linearGradient id="shirt" x1="0" y1="0" x2="1" y2="0"><stop offset="0" stop-color="#4a536b"/><stop offset="0.35" stop-color="#6a7491"/><stop offset="0.6" stop-color="#5b6582"/><stop offset="1" stop-color="#3f4760"/></linearGradient>
<linearGradient id="jeans" x1="0" y1="0" x2="1" y2="0"><stop offset="0" stop-color="#5f6a7c"/><stop offset="0.3" stop-color="#8893a5"/><stop offset="0.55" stop-color="#6b778a"/><stop offset="0.8" stop-color="#8a96a8"/><stop offset="1" stop-color="#566173"/></linearGradient>
</defs><path d="M213.4 89.9 L228.2 91.6 L253.5 95.0 L277.0 98.3 L284.5 97.5 L286.6 94.1 L285.2 87.4 L283.4 79.0 L283.8 68.9 L288.8 62.1 L297.2 58.8 L305.6 60.5 L311.5 67.2 L313.2 75.6 L310.9 80.6 L312.4 85.7 L309.8 90.7 L306.5 94.1 L303.9 96.6 L312.4 100.8 L324.1 105.9 L340.7 113.7 L361.0 120.3 L381.4 126.9 L399.1 133.4 L418.1 135.0 L434.4 141.3 L434.0 143.0 L418.1 143.4 L399.1 141.6 L388.2 140.2 L363.8 137.1 L343.4 134.4 L330.4 135.8 L325.4 140.5 L321.6 148.0 L319.1 161.4 L320.4 177.0 L320.9 198.2 L319.3 234.5 L320.0 263.4 L326.3 272.5 L325.4 279.8 L319.1 285.2 L310.0 287.9 L304.6 285.2 L305.3 270.7 L303.2 252.0 L299.2 219.0 L297.0 219.0 L296.2 252.0 L297.8 259.0 L301.3 260.7 L301.0 266.2 L288.3 274.3 L280.1 273.4 L280.1 270.7 L281.0 259.8 L277.8 234.5 L279.2 203.7 L276.5 180.0 L275.6 162.0 L270.3 148.0 L267.8 134.5 L265.6 118.5 L258.5 110.1 L245.1 103.4 L228.2 97.5 L213.4 94.1 Z" fill="#ff6a00" stroke="#ff6a00" stroke-width="9.4" stroke-linejoin="round" filter="url(#glow)"/><g clip-path="url(#body)"><rect x="200" y="50" width="250" height="250" fill="#59637f"/><rect x="265" y="95" width="60" height="90" fill="url(#shirt)"/><path d="M213.0 89.0 L285.0 97.0 L287.0 104.0 L263.0 108.0 L233.0 97.0 L213.0 94.0 Z" fill="#6d7794" filter="url(#soft1)"/><path d="M223.0 94.0 L259.0 108.0 L267.0 120.0 L263.0 110.0 L243.0 101.0 Z" fill="#394158" filter="url(#soft1)"/><path d="M305.0 98.0 L353.0 114.0 L403.0 132.0 L393.0 138.0 L353.0 128.0 L313.0 114.0 Z" fill="#7f89a6" filter="url(#soft1)"/><path d="M328.0 132.0 L363.0 132.0 L399.0 139.0 L399.0 143.0 L363.0 138.0 L329.0 138.0 Z" fill="#2f364b" filter="url(#soft1)"/><path d="M341.0 118.0 L359.0 122.0 L353.0 132.0 L338.0 129.0 Z" fill="#9aa3bd" filter="url(#soft)"/><path d="M271.0 114.0 L283.0 110.0 L287.0 152.0 L290.0 178.0 L279.0 178.0 L273.0 150.0 Z" fill="#6e7896" filter="url(#soft)"/><path d="M293.0 114.0 L305.0 112.0 L309.0 144.0 L305.0 174.0 L297.0 174.0 Z" fill="#3f4862" filter="url(#soft)"/><path d="M307.0 122.0 L323.0 128.0 L321.0 144.0 L317.0 166.0 L309.0 172.0 Z" fill="#7c86a3" filter="url(#soft)"/><path d="M298.0 152.0 L313.0 150.0 L315.0 172.0 L301.0 174.0 Z" fill="#96a0ba" filter="url(#soft)"/><path d="M267.0 122.0 L273.0 122.0 L279.0 172.0 L275.0 174.0 Z" fill="#39415a" filter="url(#soft1)"/><path d="M274.0 175.0 L321.0 176.0 L321.0 179.0 L275.0 179.0 Z" fill="#2a2d38" filter="url(#soft1)"/><rect x="270" y="179.5" width="60" height="110" fill="url(#jeans)"/><path d="M277.0 182.0 L285.0 182.0 L287.0 262.0 L280.0 262.0 Z" fill="#566072" filter="url(#soft1)"/><path d="M289.0 182.0 L300.0 182.0 L298.0 222.0 L296.0 262.0 L291.0 262.0 Z" fill="#7b8799" filter="url(#soft1)"/><path d="M300.0 182.0 L309.0 182.0 L308.0 272.0 L304.0 272.0 L301.0 222.0 Z" fill="#4b5567" filter="url(#soft1)"/><path d="M311.0 182.0 L321.0 182.0 L320.0 267.0 L313.0 272.0 Z" fill="#8d99ab" filter="url(#soft1)"/><path d="M279.0 268.0 L290.0 263.0 L302.0 258.0 L302.0 268.0 L288.0 276.0 L279.0 275.0 Z" fill="#8a5634" /><path d="M281.0 271.0 L293.0 268.0 L301.0 264.0 L301.0 268.0 L288.0 275.0 L280.0 274.0 Z" fill="#c9b9a8" /><path d="M304.0 280.0 L315.0 278.0 L327.0 270.0 L327.0 281.0 L317.0 288.0 L304.0 288.0 Z" fill="#8a5634" /><path d="M305.0 285.0 L317.0 283.0 L326.0 276.0 L326.0 281.0 L317.0 288.0 L305.0 288.0 Z" fill="#c9b9a8" /><ellipse cx="298.0" cy="75.4" rx="15.2" ry="17.6" fill="url(#hair)"/><path d="M289.0 66.0 L293.0 62.0 L295.0 72.0 L292.0 80.0 Z" fill="#b5ab9f" filter="url(#soft1)" fill-opacity=".55"/><path d="M296.0 63.0 L302.0 62.0 L304.0 72.0 L299.0 75.0 Z" fill="#a39a8f" filter="url(#soft1)" fill-opacity=".5"/><path d="M285.0 80.0 L293.0 86.0 L299.0 92.0 L289.0 93.0 L285.0 88.0 Z" fill="#35312e" filter="url(#soft1)" fill-opacity=".8"/><path d="M306.5 80.0 L313.5 78.5 L313.5 87.0 L311.0 92.0 L306.0 95.5 L303.0 93.0 Z" fill="#c19a82" /><path d="M302.5 81.5 L306.0 78.0 L309.2 79.0 L308.6 83.0 L306.6 85.0 L308.0 88.5 L305.5 91.0 L301.8 90.6 L302.6 86.0 Z" fill="#ff6a00" /><path d="M309.0 83.5 L310.2 83.5 L310.0 86.0 L309.0 86.0 Z" fill="#f4e6dc" /><path d="M296.0 92.5 L306.0 92.0 L307.0 98.5 L295.0 98.5 Z" fill="#b9927a" filter="url(#soft1)"/><path d="M403.0 133.0 L418.0 135.0 L435.0 141.5 L418.0 143.5 L401.0 142.0 Z" fill="#d9b9a2" /><path d="M213.0 89.0 L221.0 90.5 L221.0 95.5 L213.0 94.5 Z" fill="#d9b9a2" /></g><path d="M292.5 111.0 L289.6 108.0 L263.0 101.5 L288.3 111.8 Z" fill="#1fe24a" fill-opacity=".5" stroke="#1fe24a" stroke-width="1.4" stroke-linejoin="round"/><path d="M263.0 101.5 L260.2 99.0 L236.0 95.5 L259.4 102.5 Z" fill="#1fe24a" fill-opacity=".5" stroke="#1fe24a" stroke-width="1.4" stroke-linejoin="round"/><path d="M236.0 95.5 L233.8 92.9 L214.0 91.5 L233.0 97.2 Z" fill="#1fe24a" fill-opacity=".5" stroke="#1fe24a" stroke-width="1.4" stroke-linejoin="round"/><path d="M293.5 111.0 L296.6 114.0 L324.0 120.0 L297.7 110.2 Z" fill="#1fe24a" fill-opacity=".5" stroke="#1fe24a" stroke-width="1.4" stroke-linejoin="round"/><path d="M324.0 120.0 L327.7 123.0 L359.0 129.0 L328.7 119.1 Z" fill="#1fe24a" fill-opacity=".5" stroke="#1fe24a" stroke-width="1.4" stroke-linejoin="round"/><path d="M359.0 129.0 L363.1 132.0 L397.0 137.5 L364.0 128.1 Z" fill="#1fe24a" fill-opacity=".5" stroke="#1fe24a" stroke-width="1.4" stroke-linejoin="round"/><path d="M397.0 135.0 L433.0 141.5 L415.0 144.0 L397.0 140.5 Z" fill="#1fe24a" /><path d="M213.0 89.5 L225.0 91.5 L225.0 94.5 L213.0 93.5 Z" fill="#1fe24a" /><path d="M290.5 180.0 L292.0 126.0 L294.5 126.0 L296.5 180.0 Z" fill="#1fe24a" fill-opacity=".85"/><path d="M293.5 122.0 L295.0 104.0 L300.0 85.5" fill="none" stroke="#1fe24a" stroke-width="1.6" stroke-opacity="1.00" stroke-linejoin="round"/><path d="M283.0 221.0 L291.2 221.0 L288.0 263.4 L286.8 263.4 Z" fill="#1fe24a" fill-opacity=".45" stroke="#1fe24a" stroke-width="1.1" stroke-linejoin="round"/><path d="M306.2 232.0 L313.9 232.0 L312.4 278.0 L311.2 278.0 Z" fill="#1fe24a" fill-opacity=".45" stroke="#1fe24a" stroke-width="1.1" stroke-linejoin="round"/><path d="M281.0 176.0 L283.5 221.0" fill="none" stroke="#1fe24a" stroke-width="1.1" stroke-opacity="1.00" stroke-linejoin="round"/><path d="M293.0 186.0 L290.5 221.0" fill="none" stroke="#1fe24a" stroke-width="1.1" stroke-opacity="1.00" stroke-linejoin="round"/><path d="M285.0 182.0 L287.0 221.0" fill="none" stroke="#1fe24a" stroke-width="1.0" stroke-opacity="1.00" stroke-linejoin="round"/><path d="M303.0 182.0 L306.5 232.0" fill="none" stroke="#1fe24a" stroke-width="1.1" stroke-opacity="1.00" stroke-linejoin="round"/><path d="M311.0 196.0 L313.5 232.0" fill="none" stroke="#1fe24a" stroke-width="1.1" stroke-opacity="1.00" stroke-linejoin="round"/><path d="M307.0 187.0 L310.0 232.0" fill="none" stroke="#1fe24a" stroke-width="1.0" stroke-opacity="1.00" stroke-linejoin="round"/><path d="M288.5 263.0 L297.0 260.5" fill="none" stroke="#1fe24a" stroke-width="1.6" stroke-opacity="1.00" stroke-linejoin="round"/><path d="M312.5 278.0 L321.0 275.5" fill="none" stroke="#1fe24a" stroke-width="1.6" stroke-opacity="1.00" stroke-linejoin="round"/><path d="M280.0 176.0 L296.0 173.0 L310.0 179.0 L310.0 196.0 L295.0 205.0 L280.0 198.0 L280.0 176.0" fill="none" stroke="#1fe24a" stroke-width="1.0" stroke-opacity="0.80" stroke-linejoin="round"/><path d="M294.6 191.0 L310.0 198.2 L295.5 205.4 L280.1 198.2 Z" fill="#b4e64a" fill-opacity=".55" stroke="#c8f050" stroke-width="1"/><path d="M294.6 191.0 L280.1 198.2 L280.1 182.8 L294.6 175.6 Z" fill="#d04040" fill-opacity=".28" stroke="#d04a3a" stroke-width="1"/><path d="M294.6 191.0 L310.0 198.2 L310.0 182.8 L294.6 175.6 Z" fill="#4a70e0" fill-opacity=".28" stroke="#4a78e8" stroke-width="1"/><path d="M294.6 191.0 L354.0 215.5" fill="none" stroke="#e0402a" stroke-width="1.2" stroke-opacity="1.00" stroke-linejoin="round"/><path d="M294.6 191.0 L334.0 169.0" fill="none" stroke="#3a6ae8" stroke-width="1.2" stroke-opacity="1.00" stroke-linejoin="round"/><path d="M292.8 191.0 L292.8 122.0" fill="none" stroke="#7dea3a" stroke-width="1.4" stroke-opacity="1.00" stroke-linejoin="round"/><path d="M372.5 224.5 L355.5 207.0 L351.5 219.5 Z" fill="#f04020" /><ellipse cx="353.5" cy="213.3" rx="3" ry="6.6" transform="rotate(17 353.5 213.3)" fill="#e83a1c"/><path d="M372.5 224.5 L358.0 220.0 L352.0 219.8 Z" fill="#8a2410" /><circle cx="336.8" cy="167.3" r="5.3" fill="#3565e6"/><path d="M334.0 162.5 L345.0 161.5 L340.5 171.0 Z" fill="#2f5ad8" /><path d="M342.0 161.3 L345.6 161.0 L344.0 164.0 Z" fill="#1a2f7a" /><path d="M291.8 100.5 L298.6 122.0 L285.4 122.0 Z" fill="#8aee3c" /><ellipse cx="292.0" cy="122.0" rx="6.6" ry="2.4" fill="#6fd82c"/><path d="M291.8 100.5 L294.0 122.0 L298.6 122.0 Z" fill="#b6ff6a" fill-opacity=".5"/></svg><!--/CHAR-->
<!--GIZ--><svg class="abs" style="left:538px;top:0" width="92" height="114" viewBox="745 118 92 114">
<defs><linearGradient id="gw" x1="0" y1="0" x2="1" y2="1"><stop offset="0" stop-color="#ffffff"/><stop offset="1" stop-color="#9a9a9a"/></linearGradient>
<linearGradient id="gg" x1="0" y1="0" x2="1" y2="0"><stop offset="0" stop-color="#9a9da3"/><stop offset="1" stop-color="#5f6166"/></linearGradient></defs>
<!-- gray cone (-z, toward viewer) -->
<path d="M780 172.5 L766 173.6 L762.5 190 Z" fill="url(#gg)"/>
<ellipse cx="763.6" cy="182" rx="5.2" ry="8.4" transform="rotate(-22 763.6 182)" fill="#d2d2d4"/>
<!-- white cone upper-left -->
<path d="M779 165.5 L770.5 157.2 L765.5 166.5 Z" fill="#f4f4f4"/>
<ellipse cx="768" cy="162" rx="3.2" ry="5.4" transform="rotate(-28 768 162)" fill="#ffffff"/>
<path d="M779 165.5 L766 167 L770 168.8 Z" fill="#bdbdbd"/>
<!-- white cone bottom -->
<path d="M786 176 L781 191.5 Q786 194.5 791 191.5 Z" fill="url(#gw)"/>
<path d="M786 176 L781 191.5 Q783.5 193 785.5 193 Z" fill="#fff"/>
<!-- blue -->
<path d="M790 166 L796.5 156.5 Q803 156 804.5 161 Q804 166 799 166.5 Z" fill="#2f6ae6"/>
<ellipse cx="800.2" cy="161" rx="4.2" ry="5" transform="rotate(-35 800.2 161)" fill="#3f7cf2"/>
<!-- red -->
<path d="M794 172 L816 171.2 L810.5 187 Z" fill="#c8321a"/>
<path d="M794 172 L816 171.2 L813.2 179.5 Z" fill="#a82812"/>
<path d="M816 171.2 L810.5 187 L808.5 183 Z" fill="#7a1c0c"/>
<!-- green -->
<path d="M778.6 139.4 H794 L786.2 160.5 Z" fill="#6cc22e"/>
<path d="M786.2 139.4 H794 L786.2 160.5 Z" fill="#4f9a1f"/>
<!-- cube -->
<path d="M777 163.5 L786.5 160 L795 164 L794.5 174 L786 178.5 L777.5 174.5 Z" fill="#b9bbc0"/>
<path d="M777 163.5 L786.5 160 L795 164 L786 167.5 Z" fill="#c6c8cc"/>
<path d="M786 167.5 L795 164 L794.5 174 L786 178.5 Z" fill="#a9abb0"/>
<g font-family="Liberation Sans, sans-serif" font-weight="bold" font-size="11" fill="#fff"><text x="782.6" y="134.5">y</text><text x="805.8" y="160.4">z</text><text x="817.6" y="185.2">x</text></g>
<!-- lock -->
<rect x="818.2" y="134" width="7" height="5" fill="#b8b8b8"/><path d="M819.8 134 V132.4 A1.9 1.9 0 0 1 823.6 132.4 V133" stroke="#b8b8b8" stroke-width="1" fill="none"/>
<!-- persp -->
<path d="M772 214.2 L762.5 218.8 L772 223.3 M762.5 218.8 H772" stroke="#c4c4c4" stroke-width="1" fill="none"/>
<text x="775" y="223.6" font-family="Liberation Sans, sans-serif" font-size="11.5" letter-spacing="0.45" fill="#c8c8c8">Persp</text>
</svg><!--/GIZ-->

  </div>

  <!-- SCENE TABS -->
  <div class="tab" style="left:205px;top:84px;width:100px;height:18px"></div>
  <svg class="abs" style="left:214px;top:87px" width="12" height="12" viewBox="0 0 12 12"><g stroke="#666" stroke-width="1" fill="none"><path d="M1 2.5 H11 M1 5.5 H11 M1 8.5 H11 M4.5 0.5 V11.5 M8 0.5 V11.5"/></g></svg>
  <div class="tabt" id="tscene" style="left:229px;top:87px">Scene</div>
  <svg class="abs" style="left:316px;top:87px" width="10" height="11" viewBox="0 0 10 11"><path d="M9 2.6 A4.6 4.6 0 1 0 9 8.4 L5 5.5 Z" fill="#333"/></svg>
  <div class="tabt" id="tgame" style="left:329.5px;top:87px">Game</div>
  <svg class="abs" style="left:415px;top:86px" width="12" height="12" viewBox="0 0 12 12"><rect x="1.5" y="4" width="9" height="7.3" fill="#bdbdbd" stroke="#444" stroke-width="1"/><path d="M0.8 4 H11.2 M6 4 V11 M3.2 3.5 C2 0.8 5 0.8 6 3.5 C7 0.8 10 0.8 8.8 3.5" stroke="#444" stroke-width="1" fill="none"/></svg>
  <div class="tabt" id="tasset" style="left:429.5px;top:87px">Asset Store</div>
  <div class="dd" style="left:819px;top:94px;border-top-color:#555;border-left-width:2.5px;border-right-width:2.5px;border-top-width:3px"></div>
  <div class="abs" style="left:825px;top:94px;width:8px;height:5px;border-top:1px solid #555;border-bottom:1px solid #555"><div style="margin-top:1px;height:1px;background:#555"></div></div>
  <!-- SCENE TOOLBAR -->
  <div class="abs" style="left:206px;top:101px;width:632px;height:17px;overflow:hidden">
    <div class="tbar" style="left:0;top:0;width:632px"></div>
    <div class="vsep" style="left:4px;top:1px"></div>
    <div class="bt" id="bshaded" style="left:11px;top:2.5px;font-size:9.8px;letter-spacing:0.37px;-webkit-text-stroke:.25px #111">Shaded</div>
    <div class="dd" style="left:117px;top:6px;border-left-width:2.5px;border-right-width:2.5px;border-top-width:3.5px;border-top-color:#444"></div>
    <div class="vsep" style="left:126px;top:1px"></div><div class="vsep" style="left:131px;top:1px"></div>
    <div class="bt" style="left:136.5px;top:1.5px;font-size:11.5px;letter-spacing:.5px">2D</div>
    <div class="vsep" style="left:156px;top:1px"></div><div class="vsep" style="left:162px;top:1px"></div>
    <div class="abs" style="left:163px;top:1px;width:25px;height:15px;background:#fbfbfb"></div>
    <svg class="abs" style="left:169px;top:2px" width="13" height="13" viewBox="0 0 13 13"><circle cx="6.5" cy="6.5" r="2.1" fill="none" stroke="#222" stroke-width="1"/><g stroke="#222" stroke-width="1"><path d="M6.5 0.5 V2.8 M6.5 10.2 V12.5 M0.5 6.5 H2.8 M10.2 6.5 H12.5 M2.3 2.3 L3.9 3.9 M9.1 9.1 L10.7 10.7 M2.3 10.7 L3.9 9.1 M9.1 3.9 L10.7 2.3"/></g></svg>
    <div class="vsep" style="left:188px;top:1px"></div>
    <svg class="abs" style="left:194px;top:2px" width="16" height="13" viewBox="0 0 16 13"><path d="M1 4.5 H3.5 L7 1.2 V11.8 L3.5 8.5 H1 Z" fill="#aaa" stroke="#444" stroke-width="0.9"/><path d="M9 4 A3.6 3.6 0 0 1 9 9 M10.8 2.3 A6 6 0 0 1 10.8 10.7 M12.6 0.8 A8 8 0 0 1 12.6 12.2" stroke="#444" stroke-width="1" fill="none"/></svg>
    <div class="vsep" style="left:214px;top:1px"></div>
    <svg class="abs" style="left:221px;top:3px" width="14" height="11" viewBox="0 0 14 11"><rect x="0.7" y="0.7" width="12.6" height="9.6" fill="#fff" stroke="#222" stroke-width="1.4"/><path d="M1.5 9.5 L5 4.5 L8 8 L10 6 L12.5 9.5 Z" fill="#222"/></svg>
    <div class="vsep" style="left:240px;top:1px"></div>
    <div class="dd" style="left:243px;top:6px;border-left-width:2.5px;border-right-width:2.5px;border-top-width:3.5px;border-top-color:#444"></div>
    <div class="vsep" style="left:251px;top:1px"></div>
    <div class="vsep" style="left:357px;top:1px"></div>
    <div class="bt" id="bgizmos" style="left:364px;top:2.5px;font-size:9.8px;letter-spacing:0.38px;-webkit-text-stroke:.25px #111">Gizmos</div>
    <div class="dd" style="left:404px;top:6px;border-left-width:2.5px;border-right-width:2.5px;border-top-width:3.5px;border-top-color:#444"></div>
    <div class="vsep" style="left:412px;top:1px"></div>
    <div class="sfield" style="left:420px;top:2px;width:205px"></div>
    <svg class="abs" style="left:427px;top:4px" width="14" height="10" viewBox="0 0 14 10"><circle cx="3.8" cy="4.2" r="2.7" fill="none" stroke="#777" stroke-width="1.1"/><path d="M5.8 6.2 L8 8.6" stroke="#777" stroke-width="1.3"/><path d="M8.2 3 h4 l-2 2.6z" fill="#777"/></svg>
    <div class="bt" style="left:438px;top:1.5px;color:#8a8a8a;font-size:11.5px;letter-spacing:.3px">All</div>
  </div>

  <!-- Project panel -->
  <div class="panel" id="proj" style="left:3px;top:499px;width:834px;height:250px"></div>
<!--PROJ--><div class="tab" style="left:2px;top:482px;width:99px;height:18px"></div><svg class="abs" style="left:10px;top:486px" width="11" height="9" viewBox="0 0 11 9"><path d="M0.5 2 Q0.5 0.5 2 0.5 H4.5 L5.5 1.8 H9.5 Q10.5 1.8 10.5 2.8 V8.5 H0.5 Z" fill="#9a9a9a" stroke="#444" stroke-width=".9"/></svg><div class="tabt" id="tproj" style="left:25px;top:484.5px">Project</div><svg class="abs" style="left:111px;top:485px" width="10" height="12" viewBox="0 0 10 12"><rect x="0.6" y="0.6" width="8.8" height="10.8" fill="#e6e6e6" stroke="#444" stroke-width="1"/><path d="M2.5 3.5 H7.5 M2.5 6 H7.5 M2.5 8.5 H6" stroke="#555" stroke-width=".9"/></svg><div class="tabt" id="tcons" style="left:125.5px;top:484.5px">Console</div><svg class="lock" style="left:807px;top:487px" width="9" height="10" viewBox="0 0 9 10"><rect x="0.5" y="4.5" width="7" height="5" fill="#555"/><path d="M3.5 4.5 V2.8 A2 2 0 0 1 7.6 2.8 V3.6" stroke="#555" stroke-width="1.1" fill="none"/></svg><div class="dd" style="left:820.5px;top:492px;border-top-color:#555;border-left-width:2.5px;border-right-width:2.5px;border-top-width:3px"></div><div class="abs" style="left:826px;top:492px;width:8px;height:5px;border-top:1px solid #555;border-bottom:1px solid #555"><div style="margin-top:1px;height:1px;background:#555"></div></div><div class="tbar" style="left:3px;top:499px;width:834px;height:18px"></div><div class="vsep" style="left:8px;top:500px;height:16px"></div><div class="bt" style="left:14.4px;top:502px;font-size:9.8px;letter-spacing:0.65px;-webkit-text-stroke:.25px #111">Create</div><div class="dd" style="left:52px;top:506px;border-left-width:2.5px;border-right-width:2.5px;border-top-width:3.5px;border-top-color:#444"></div><div class="vsep" style="left:60px;top:500px;height:16px"></div><div class="sfield" style="left:455px;top:501px;width:300px"></div><svg class="abs" style="left:461px;top:503px" width="10" height="10" viewBox="0 0 10 10"><circle cx="3.8" cy="4.2" r="2.7" fill="none" stroke="#666" stroke-width="1.1"/><path d="M5.8 6.2 L8 8.6" stroke="#666" stroke-width="1.3"/></svg><div class="vsep" style="left:765px;top:500px;height:16px"></div><div class="vsep" style="left:787px;top:500px;height:16px"></div><div class="vsep" style="left:809px;top:500px;height:16px"></div><div class="vsep" style="left:831px;top:500px;height:16px"></div><svg class="abs" style="left:770px;top:502px" width="14" height="13" viewBox="0 0 14 13"><circle cx="9" cy="3.8" r="3" fill="#4a4a4a"/><path d="M1 11.5 L5 4.5 L9 11.5 Z" fill="#4a4a4a"/><rect x="8" y="7.5" width="4.5" height="4.5" fill="#4a4a4a"/></svg><svg class="abs" style="left:792px;top:502px" width="14" height="13" viewBox="0 0 14 13"><path d="M1 1 H6.5 L13 7.5 L7.5 12.5 L1 6.5 Z" fill="#4a4a4a"/><circle cx="3.8" cy="3.8" r="1.1" fill="#ddd"/></svg><svg class="abs" style="left:814px;top:502px" width="13" height="12" viewBox="0 0 15 14"><path d="M7.5 0.8 L9.5 5.2 L14.2 5.6 L10.6 8.7 L11.8 13.3 L7.5 10.8 L3.2 13.3 L4.4 8.7 L0.8 5.6 L5.5 5.2 Z" fill="#9a9a9a"/></svg><div class="abs" style="left:116px;top:517px;width:1px;height:231px;background:#8c8c8c"></div><div class="arr" style="left:8px;top:521px"></div><svg class="abs" style="left:18px;top:518px" width="16" height="15" viewBox="0 0 16 15"><path d="M8 0.6 L10.2 5.3 L15.4 5.9 L11.5 9.4 L12.6 14.5 L8 11.9 L3.4 14.5 L4.5 9.4 L0.6 5.9 L5.8 5.3 Z" fill="#f7c31c" stroke="#c48a08" stroke-width=".8"/><path d="M8 2.5 L9.4 6 L5 6.4 Z" fill="#fff3a8" fill-opacity=".8"/></svg><div class="prow" id="pfav" style="left:36.5px;top:517.5px;font-weight:bold;font-size:11.5px;letter-spacing:1.05px">Favorites</div><div class="ar" style="left:7px;top:553px"></div><svg class="fold" style="left:18px;top:550px" viewBox="0 0 15 13"><path d="M1 2.2 Q1 1 2.2 1 H6 L7.2 2.4 H13 Q14 2.4 14 3.4 V4.5 H1 Z" fill="#e8e8e8" stroke="#8a8a8a" stroke-width=".6"/><rect x="0.7" y="4" width="13.6" height="8.3" rx="1.2" fill="#7b868c" stroke="#4e575c" stroke-width=".7"/><rect x="1.2" y="4.5" width="12.6" height="1.2" fill="#a9b2b7"/></svg><div class="prow" id="pass" style="left:36.5px;top:548.5px;font-weight:bold;font-size:11.5px;letter-spacing:0.7px">Assets</div><div class="abs" style="left:3px;top:564px;width:113px;height:16px;background:#8f8f8f"></div><div class="arr" style="left:22px;top:567.5px;border-left-color:#5a5a5a"></div><svg class="fold" style="left:32px;top:566px" viewBox="0 0 15 13"><path d="M1 2.2 Q1 1 2.2 1 H6 L7.2 2.4 H13 Q14 2.4 14 3.4 V4.5 H1 Z" fill="#e8e8e8" stroke="#8a8a8a" stroke-width=".6"/><rect x="0.7" y="4" width="13.6" height="8.3" rx="1.2" fill="#7b868c" stroke="#4e575c" stroke-width=".7"/><rect x="1.2" y="4.5" width="12.6" height="1.2" fill="#a9b2b7"/></svg><div class="prow" id="pmod" style="left:50.3px;top:564px;color:#fff">Models</div><div class="ar" style="left:21px;top:585px"></div><svg class="fold" style="left:32px;top:582px" viewBox="0 0 15 13"><path d="M1 2.2 Q1 1 2.2 1 H6 L7.2 2.4 H13 Q14 2.4 14 3.4 V4.5 H1 Z" fill="#e8e8e8" stroke="#8a8a8a" stroke-width=".6"/><rect x="0.7" y="4" width="13.6" height="8.3" rx="1.2" fill="#7b868c" stroke="#4e575c" stroke-width=".7"/><rect x="1.2" y="4.5" width="12.6" height="1.2" fill="#a9b2b7"/></svg><div class="prow" id="pplu" style="left:50.3px;top:580px">Plugins</div><svg class="fold" style="left:46px;top:598px" viewBox="0 0 15 13"><path d="M1 2.2 Q1 1 2.2 1 H6 L7.2 2.4 H13 Q14 2.4 14 3.4 V4.5 H1 Z" fill="#e8e8e8" stroke="#8a8a8a" stroke-width=".6"/><rect x="0.7" y="4" width="13.6" height="8.3" rx="1.2" fill="#7b868c" stroke="#4e575c" stroke-width=".7"/><rect x="1.2" y="4.5" width="12.6" height="1.2" fill="#a9b2b7"/></svg><div class="prow" id="px86" style="left:64.7px;top:596px">x86_64</div><svg class="fold" style="left:32px;top:614px" viewBox="0 0 15 13"><path d="M1 2.2 Q1 1 2.2 1 H6 L7.2 2.4 H13 Q14 2.4 14 3.4 V4.5 H1 Z" fill="#e8e8e8" stroke="#8a8a8a" stroke-width=".6"/><rect x="0.7" y="4" width="13.6" height="8.3" rx="1.2" fill="#7b868c" stroke="#4e575c" stroke-width=".7"/><rect x="1.2" y="4.5" width="12.6" height="1.2" fill="#a9b2b7"/></svg><div class="prow" id="psce" style="left:50.3px;top:612px">Scenes</div><svg class="fold" style="left:32px;top:630px" viewBox="0 0 15 13"><path d="M1 2.2 Q1 1 2.2 1 H6 L7.2 2.4 H13 Q14 2.4 14 3.4 V4.5 H1 Z" fill="#e8e8e8" stroke="#8a8a8a" stroke-width=".6"/><rect x="0.7" y="4" width="13.6" height="8.3" rx="1.2" fill="#7b868c" stroke="#4e575c" stroke-width=".7"/><rect x="1.2" y="4.5" width="12.6" height="1.2" fill="#a9b2b7"/></svg><div class="prow" id="pscr" style="left:50.3px;top:628px">Scripts</div><div class="abs" style="left:117px;top:517px;width:720px;height:17px;background:#dedede;border-bottom:1px solid #a6a6a6"></div><div class="prow" id="bc1" style="left:123.4px;top:517.5px">Assets</div><div class="abs" style="left:165px;top:522.5px;width:0;height:0;border-top:3px solid transparent;border-bottom:3px solid transparent;border-left:5px solid #777"></div><div class="prow" id="bc2" style="left:178px;top:517.5px;font-weight:bold;font-size:11.5px;letter-spacing:0.8px">Models</div><div class="abs" style="left:229px;top:522.5px;width:0;height:0;border-top:3px solid transparent;border-bottom:3px solid transparent;border-left:5px solid #777"></div><svg class="abs" style="left:138px;top:554px" width="57" height="46" viewBox="0 0 57 46"><defs><linearGradient id="bf1" x1="0" y1="0" x2="0" y2="1"><stop offset="0" stop-color="#7e8b93"/><stop offset="1" stop-color="#525e65"/></linearGradient><linearGradient id="bt1" x1="0" y1="0" x2="0" y2="1"><stop offset="0" stop-color="#f4f4f4"/><stop offset="1" stop-color="#c9cdd0"/></linearGradient></defs><path d="M0.5 4 Q0.5 0.5 4 0.5 H20 Q22.5 0.5 23.5 3 L24.2 4.6 H53 Q56.5 4.6 56.5 8 V12 H0.5 Z" fill="url(#bt1)"/><rect x="0.5" y="8.3" width="56" height="37" rx="3.5" fill="url(#bf1)"/><path d="M0.5 38 L56.5 14 V41.8 Q56.5 45.3 53 45.3 H4 Q0.5 45.3 0.5 41.8 Z" fill="#46525a" fill-opacity=".28"/><rect x="1" y="8.6" width="55" height="1.2" fill="#a7b1b7" fill-opacity=".8"/></svg><svg class="abs" style="left:216px;top:554px" width="57" height="46" viewBox="0 0 57 46"><defs><linearGradient id="bf2" x1="0" y1="0" x2="0" y2="1"><stop offset="0" stop-color="#7e8b93"/><stop offset="1" stop-color="#525e65"/></linearGradient><linearGradient id="bt2" x1="0" y1="0" x2="0" y2="1"><stop offset="0" stop-color="#f4f4f4"/><stop offset="1" stop-color="#c9cdd0"/></linearGradient></defs><path d="M0.5 4 Q0.5 0.5 4 0.5 H20 Q22.5 0.5 23.5 3 L24.2 4.6 H53 Q56.5 4.6 56.5 8 V12 H0.5 Z" fill="url(#bt2)"/><rect x="0.5" y="8.3" width="56" height="37" rx="3.5" fill="url(#bf2)"/><path d="M0.5 38 L56.5 14 V41.8 Q56.5 45.3 53 45.3 H4 Q0.5 45.3 0.5 41.8 Z" fill="#46525a" fill-opacity=".28"/><rect x="1" y="8.6" width="55" height="1.2" fill="#a7b1b7" fill-opacity=".8"/></svg><div class="abs" style="left:354px;top:549px;width:472px;height:56px;border-radius:7px;background:#525252;box-shadow:0 1px 1px rgba(0,0,0,.35)"></div><div class="abs" style="left:821.5px;top:572.5px;width:9px;height:9px;background:#c2c2c2;transform:rotate(45deg)"></div><div class="abs" style="left:291px;top:547px;width:60px;height:60px;background:#555;border:1px solid #707070"></div><svg class="abs" style="left:346px;top:569px" width="14" height="14" viewBox="0 0 14 14"><circle cx="7" cy="7" r="6" fill="#5e5e5e" stroke="#d8d8d8" stroke-width="1.2"/><path d="M9.3 3.8 V10.2 L4.2 7 Z" fill="#e8e8e8"/></svg><svg class="abs" style="left:291px;top:547px" width="60" height="60" viewBox="0 0 60 60"><g><path d="M20 22.5 L29 19.5 L38 16.5 L39 17.6 L32.5 21 L32 30 L31.5 44 L29.5 44.5 L29.5 32 L28.8 44 L27 44 L27 30 L27.5 22 L20.5 23.8 Z" fill="#2f4570"/><ellipse cx="30.5" cy="14.5" rx="2.6" ry="3" fill="#2e2a2a"/><path d="M29 16.5 h3 v2.5 h-3z" fill="#b98d72"/><circle cx="19.8" cy="23" r="1.1" fill="#d2a88c"/><circle cx="39" cy="17" r="1" fill="#d2a88c"/><path d="M26.5 44 h3 l.8 1.8 h-4z M29.8 44.5 h2.5 l1.2 1.6 h-4z" fill="#a0522d"/><path d="M27.5 23 L31 21.5 L31.5 30 L27.3 30 Z" fill="#3f5a8a"/></g></svg><svg class="abs" style="left:370px;top:549px" width="58" height="56" viewBox="0 0 58 56"><path d="M27 20 q2.5 -2 4 1 q1 3 -.5 5.5 l.8 4 l-3 1 l-.8 -4 q-2 -3 -.5 -7.5z" fill="#b79079"/><path d="M28 26 l3 1 l.6 3.5 l-2.6 .8z" fill="#8f7462"/><ellipse cx="16" cy="36.5" rx="2.6" ry="1.2" transform="rotate(-30 16 36.5)" fill="#b98e76"/><circle cx="39.5" cy="23" r="1.1" fill="#b98e76"/></svg><svg class="abs" style="left:450px;top:553px" width="56" height="52" viewBox="0 0 56 52"><defs><linearGradient id="cl" x1="0" y1="0" x2="1" y2="1"><stop offset="0" stop-color="#54b4e6"/><stop offset="1" stop-color="#3a8fca"/></linearGradient><linearGradient id="cr" x1="0" y1="0" x2="0" y2="1"><stop offset="0" stop-color="#3f97d0"/><stop offset="1" stop-color="#2a6fa8"/></linearGradient><linearGradient id="ct" x1="0" y1="0" x2="1" y2="1"><stop offset="0" stop-color="#8fd6f4"/><stop offset="1" stop-color="#bfe9fb"/></linearGradient><linearGradient id="pg" x1="0" y1="0" x2="1" y2="1"><stop offset="0" stop-color="#fdfdfd"/><stop offset="1" stop-color="#c9ced6"/></linearGradient></defs>
<path d="M2.5 11.5 L27 2.5 L51.5 10.5 L27 22 Z" fill="url(#ct)"/><path d="M2.5 11.5 L27 22 V49.5 L5 38 Z" fill="url(#cl)"/><path d="M27 22 L51.5 10.5 L50 38.5 L27 49.5 Z" fill="url(#cr)"/>
<path d="M31.5 25 Q31.5 22.8 33.6 22.8 H46 L52.6 29.5 V47.5 Q52.6 49.6 50.5 49.6 H33.6 Q31.5 49.6 31.5 47.5 Z" fill="url(#pg)" stroke="#aeb4bd" stroke-width=".6"/></svg><svg class="abs" style="left:528px;top:560px" width="46" height="36" viewBox="0 0 46 36"><defs><radialGradient id="sp" cx=".35" cy=".3" r=".8"><stop offset="0" stop-color="#b9cbfb"/><stop offset=".5" stop-color="#7f9be8"/><stop offset="1" stop-color="#5570c4"/></radialGradient></defs><circle cx="15.6" cy="22.3" r="9.6" fill="url(#sp)"/><circle cx="33.6" cy="12" r="7" fill="url(#sp)"/></svg><svg class="abs" style="left:610px;top:555px" width="44" height="44" viewBox="0 0 44 44"><path d="M13.5 11.5 L19.5 8.6 L24 7.2 L31.5 4.2 L32.4 6.2 L27.6 9.8 L27.2 19 L26.6 36 L24.4 36.4 L24.2 25 L23.2 36.6 L20.8 36.2 L21 21 L20.6 12 L14.2 13.6 Z" fill="#2d4068"/><path d="M21.6 11 L26.6 9.4 L26.6 20 L21.6 20Z" fill="#3f5889"/><path d="M22 20 L26.5 20 L26 34 L24.6 34 L24.2 24 L23 34 L21.4 34Z" fill="#33497a"/><ellipse cx="22.8" cy="8.2" rx="1.8" ry="2" fill="#2a2e40"/></svg><svg class="abs" style="left:688px;top:563px" width="46" height="30" viewBox="0 0 46 30"><defs><linearGradient id="sh" x1="0" y1="0" x2="0" y2="1"><stop offset="0" stop-color="#c98a66"/><stop offset=".6" stop-color="#a5623f"/><stop offset="1" stop-color="#7a4226"/></linearGradient></defs>
<g transform="translate(16 3) rotate(13)"><path d="M1.5 2.6 Q1.5 1 3.5 1.2 L9 2 L11.5 4.4 Q16 6 20.5 6.8 Q24.5 7.8 24.2 10.6 Q24 12 22 12 H3.5 Q1 12 1 9.5 Z" fill="url(#sh)"/><path d="M1.8 2.2 L9 2 L10.6 3.8 Q5.5 4.6 1.6 3.8Z" fill="#9db3e2"/><path d="M1.5 11.2 H23.6 Q23.4 12.6 22 12.6 H3.5 Q1.8 12.6 1.5 11.2Z" fill="#5e3420"/></g>
<g transform="translate(2 11) rotate(15)"><path d="M1.5 2.6 Q1.5 1 3.5 1.2 L10 2 L12.5 4.4 Q17.5 6 22.5 6.8 Q26.8 7.8 26.5 10.8 Q26.2 12.4 24 12.4 H3.5 Q1 12.4 1 9.5 Z" fill="url(#sh)"/><path d="M1.8 2.2 L10 2 L11.6 3.8 Q6 4.8 1.6 3.8Z" fill="#9db3e2"/><path d="M1.5 11.5 H26 Q25.6 13 24 13 H3.5 Q1.8 13 1.5 11.5Z" fill="#5e3420"/></g></svg><svg class="abs" style="left:772px;top:560px" width="34" height="30" viewBox="0 0 34 30"><defs><radialGradient id="hr" cx=".4" cy=".35" r=".7"><stop offset="0" stop-color="#85888f"/><stop offset=".6" stop-color="#5a5d63"/><stop offset="1" stop-color="#3a3b3f"/></radialGradient></defs><path d="M4 14 Q3 5 12 2.5 Q20 0.5 26 5 Q31 8.5 30.5 13 L28.5 16 L27 13.5 Q25 16 22 17 Q17 18 14 21.5 L12 26 Q9.5 27.5 8.5 25 L8.5 22 Q4.5 20 4 14Z" fill="url(#hr)"/></svg><div class="lbl" id="l1_0" style="left:126px;top:610.7px;letter-spacing:0"><span style="letter-spacing:0.38px">Materials</span></div><div class="lbl" id="l1_1" style="left:204px;top:610.7px;letter-spacing:0"><span style="letter-spacing:0.55px">textures</span></div><div class="lbl" id="l1_2" style="left:282px;top:610.7px;letter-spacing:0"><span style="letter-spacing:0.46px">AsianBoy</span></div><div class="lbl" id="l1_3" style="left:360px;top:610.7px;letter-spacing:0"><span style="letter-spacing:0.14px">asianboy</span><span style="font-size:7.6px;letter-spacing:0">…</span></div><div class="lbl" id="l1_4" style="left:438px;top:610.7px;letter-spacing:0"><span style="letter-spacing:-0.08px">Game_eng</span><span style="font-size:7.6px;letter-spacing:0">…</span></div><div class="lbl" id="l1_5" style="left:516px;top:610.7px;letter-spacing:0"><span style="letter-spacing:0.32px">high-poly</span><span style="font-size:7.6px;letter-spacing:0">…</span></div><div class="lbl" id="l1_6" style="left:594px;top:610.7px;letter-spacing:0"><span style="letter-spacing:0.22px">male_cas</span><span style="font-size:7.6px;letter-spacing:0">…</span></div><div class="lbl" id="l1_7" style="left:672px;top:610.7px;letter-spacing:0"><span style="letter-spacing:0.44px">shoes01</span><span style="font-size:7.6px;letter-spacing:0">…</span></div><div class="lbl" id="l1_8" style="left:750px;top:610.7px;letter-spacing:0"><span style="letter-spacing:0.43px">short02M</span><span style="font-size:7.6px;letter-spacing:0">…</span></div><div class="abs" style="left:131px;top:642px;width:458px;height:56px;border-radius:7px;background:#525252;box-shadow:0 1px 1px rgba(0,0,0,.35)"></div><div class="abs" style="left:126.5px;top:665.5px;width:9px;height:9px;background:#525252;transform:rotate(45deg)"></div><svg class="abs" style="left:136px;top:642px" width="58" height="56" viewBox="0 0 58 56"><g fill="#111"><path d="M26 24 q3 -2.5 4.5 1 q.8 2 -.8 3.5 l1.2 3 l-2 1.2 l-1 -3.5 q-3 -1 -1.9 -5.2z"/><ellipse cx="41" cy="24" rx="3" ry="1.1" transform="rotate(-25 41 24)"/><ellipse cx="17" cy="37" rx="2.4" ry="1" transform="rotate(-25 17 37)"/></g></svg><svg class="abs" style="left:222.5px;top:649px" width="52" height="40" viewBox="0 0 52 40"><defs><radialGradient id="ws" cx=".45" cy=".4" r=".65"><stop offset="0" stop-color="#ffffff"/><stop offset=".55" stop-color="#c9d0da"/><stop offset="1" stop-color="#3a3d42"/></radialGradient><pattern id="mesh" width="2.2" height="2.2" patternUnits="userSpaceOnUse"><path d="M0 0 H2.2 M0 0 V2.2" stroke="#222" stroke-width=".45" stroke-opacity=".6"/></pattern></defs><circle cx="15.5" cy="24.5" r="7.5" fill="url(#ws)"/><circle cx="15.5" cy="24.5" r="7.5" fill="url(#mesh)"/><circle cx="32.8" cy="15.5" r="9.4" fill="url(#ws)"/><circle cx="32.8" cy="15.5" r="9.4" fill="url(#mesh)"/></svg><svg class="abs" style="left:298px;top:644px" width="44" height="52" viewBox="0 0 44 52"><path d="M15.5 12 L24 6.6 L34 2 L35 4.6 L29 10.5 L28.6 24 L28 45 L25.6 45.6 L25.2 31 L24.2 46 L20.8 45.8 L20.8 26 L20.4 13.4 L16.2 14.8 Z" fill="#0e0e0e"/><path d="M22 14 L27 11.5 L27 26 L26.4 42 L25.4 42 L25 28 L23.4 42 L22 42 Z" fill="#5c5c5c" fill-opacity=".75"/><path d="M22 14 L27 11.5 L27 26 L26.4 42 L25.4 42 L25 28 L23.4 42 L22 42 Z" fill="url(#mesh)"/></svg><svg class="abs" style="left:376px;top:656px" width="50" height="30" viewBox="0 0 50 30"><defs><linearGradient id="ss" x1="0" y1="0" x2="0" y2="1"><stop offset="0" stop-color="#dfe6ee"/><stop offset="1" stop-color="#5c6876"/></linearGradient><pattern id="mesh2" width="2" height="2" patternUnits="userSpaceOnUse"><path d="M0 0 H2 M0 0 V2" stroke="#111" stroke-width=".5" stroke-opacity=".65"/></pattern></defs>
<g transform="translate(16 1) rotate(10)"><path d="M2 3 L8 0.5 L13 1.5 L20 0.5 L24 3 L28 9 Q28.5 12.5 25 12.5 H6 Q1 11.5 1.5 7Z" fill="url(#ss)"/><path d="M2 3 L8 0.5 L13 1.5 L20 0.5 L24 3 L28 9 Q28.5 12.5 25 12.5 H6 Q1 11.5 1.5 7Z" fill="url(#mesh2)"/></g>
<g transform="translate(1 12) rotate(8)"><path d="M2 3 L9 1 L16 3.5 Q23 5 27 8 Q29 12.5 25 12.5 H5 Q0.5 11.5 1 7Z" fill="url(#ss)"/><path d="M2 3 L9 1 L16 3.5 Q23 5 27 8 Q29 12.5 25 12.5 H5 Q0.5 11.5 1 7Z" fill="url(#mesh2)"/></g></svg><svg class="abs" style="left:458px;top:653px" width="40" height="36" viewBox="0 0 40 36"><defs><radialGradient id="hr2" cx=".4" cy=".3" r=".75"><stop offset="0" stop-color="#e4e8ee"/><stop offset=".45" stop-color="#8a9099"/><stop offset="1" stop-color="#111214"/></radialGradient></defs><path d="M4 15 Q3 5 13 2.5 Q23 0.5 30 5 Q36 9 35.5 15 L35 24 L31 27 L29 19 Q25 19 22 21 Q17 23 15.5 27 L13.5 32 Q10.5 33.5 9.5 30.5 L9.5 25 Q4.5 22 4 15Z" fill="url(#hr2)"/><path d="M4 15 Q3 5 13 2.5 Q23 0.5 30 5 Q36 9 35.5 15 L35 24 L31 27 L29 19 Q25 19 22 21 Q17 23 15.5 27 L13.5 32 Q10.5 33.5 9.5 30.5 L9.5 25 Q4.5 22 4 15Z" fill="url(#mesh2)"/></svg><svg class="abs" style="left:539.0px;top:644.5px" width="32.0" height="50.0" viewBox="0 0 32 50"><defs><linearGradient id="avhP" x1="0" y1="0" x2="1" y2="0"><stop offset="0" stop-color="#d9bb8c"/><stop offset=".3" stop-color="#f2dfbd"/><stop offset=".7" stop-color="#e3c596"/><stop offset="1" stop-color="#b58f5c"/></linearGradient><linearGradient id="avvP" x1="0" y1="0" x2="0" y2="1"><stop offset="0" stop-color="#f1ddb9"/><stop offset=".6" stop-color="#dcbc8b"/><stop offset="1" stop-color="#b89260"/></linearGradient></defs><ellipse cx="16.1" cy="42.8" rx="9.3" ry="7" fill="url(#avvP)" stroke="#a07c4c" stroke-width=".5"/><path d="M4 22.8 H28.2 Q31.6 22.8 31.4 26.2 L30.6 36.6 Q30.3 40 27 39.6 Q16.1 33.6 5.2 39.6 Q1.9 40 1.6 36.6 L0.8 26.2 Q0.6 22.8 4 22.8 Z" fill="url(#avvP)" stroke="#a07c4c" stroke-width=".5"/><rect x="11.6" y="18.5" width="8.9" height="5.2" fill="#cdaa78"/><path d="M8.1 5 Q8.1 0.5 12.6 0.5 H19.5 Q24 0.5 24 5 V12 Q24 17.6 20.6 19.8 Q16.1 21.2 11.5 19.8 Q8.1 17.6 8.1 12 Z" fill="url(#avhP)" stroke="#a07c4c" stroke-width=".5"/><path d="M16.4 19.8 V11 Q16.6 7.6 19.8 6.4" stroke="#b89462" stroke-width=".8" fill="none"/></svg><div class="lbl" id="l2_0" style="left:126px;top:703.7px;letter-spacing:0"><span style="letter-spacing:0.10px">asianboy</span><span style="font-size:7.6px;letter-spacing:0">…</span></div><div class="lbl" id="l2_1" style="left:204px;top:703.7px;letter-spacing:0"><span style="letter-spacing:0.27px">high-poly</span><span style="font-size:7.6px;letter-spacing:0">…</span></div><div class="lbl" id="l2_2" style="left:282px;top:703.7px;letter-spacing:0"><span style="letter-spacing:0.19px">male_cas</span><span style="font-size:7.6px;letter-spacing:0">…</span></div><div class="lbl" id="l2_3" style="left:360px;top:703.7px;letter-spacing:0"><span style="letter-spacing:0.27px">shoes01</span><span style="font-size:7.6px;letter-spacing:0">…</span></div><div class="lbl" id="l2_4" style="left:438px;top:703.7px;letter-spacing:0"><span style="letter-spacing:0.51px">short02M</span><span style="font-size:7.6px;letter-spacing:0">…</span></div><div class="lbl" id="l2_5" style="left:516px;top:703.7px;letter-spacing:0"><span style="letter-spacing:0.31px">AsianBoy</span><span style="font-size:7.6px;letter-spacing:0">…</span></div><div class="abs" style="left:117px;top:732px;width:720px;height:16px;background:#dedede;border-top:1px solid #a0a0a0"></div><div class="abs" style="left:766px;top:739px;width:55px;height:3px;background:linear-gradient(#7a7a7a,#a8a8a8);border-radius:1.5px"></div><div class="abs" style="left:792px;top:735px;width:11px;height:11px;border-radius:6px;background:linear-gradient(#fff,#d0d0d0);border:1px solid #555"></div><!--/PROJ-->
  <!-- Inspector panel -->
  <div class="panel" id="insp" style="left:841px;top:101px;width:308px;height:648px"></div>
<!--INSP--><div class="tab" style="left:840px;top:84px;width:100px;height:18px"></div><svg class="abs" style="left:849px;top:87.5px" width="11" height="11" viewBox="0 0 11 11"><circle cx="5.5" cy="5.5" r="5.2" fill="#222"/><path d="M4 4.4 H6.2 V8 M3.8 8.2 H7.4" stroke="#eee" stroke-width="1.3" fill="none"/><circle cx="5.5" cy="2.6" r=".9" fill="#eee"/></svg><div class="tabt" id="tinsp" style="left:864.8px;top:87px;letter-spacing:0.66px">Inspector</div><svg class="lock" style="left:1117px;top:89px" width="9" height="10" viewBox="0 0 9 10"><rect x="0.5" y="4.5" width="7" height="5" fill="#555"/><path d="M1.8 4.5 V2.8 A2 2 0 0 1 5.9 2.8 V4.5" stroke="#555" stroke-width="1.1" fill="none"/></svg><div class="dd" style="left:1131px;top:94px;border-top-color:#555;border-left-width:2.5px;border-right-width:2.5px;border-top-width:3px"></div><div class="abs" style="left:1137px;top:94px;width:8px;height:5px;border-top:1px solid #555;border-bottom:1px solid #555"><div style="margin-top:1px;height:1px;background:#555"></div></div><div class="abs" style="left:841px;top:101px;width:295px;height:43px;background:linear-gradient(#e4e4e4,#dadada);border-bottom:1px solid #9c9c9c;border-top:1px solid #f2f2f2"></div><svg class="abs" style="left:853.0px;top:107.8px" width="18.0" height="28.2" viewBox="0 0 32 50"><defs><linearGradient id="avhI" x1="0" y1="0" x2="1" y2="0"><stop offset="0" stop-color="#d9bb8c"/><stop offset=".3" stop-color="#f2dfbd"/><stop offset=".7" stop-color="#e3c596"/><stop offset="1" stop-color="#b58f5c"/></linearGradient><linearGradient id="avvI" x1="0" y1="0" x2="0" y2="1"><stop offset="0" stop-color="#f1ddb9"/><stop offset=".6" stop-color="#dcbc8b"/><stop offset="1" stop-color="#b89260"/></linearGradient></defs><ellipse cx="16.1" cy="42.8" rx="9.3" ry="7" fill="url(#avvI)" stroke="#a07c4c" stroke-width=".5"/><path d="M4 22.8 H28.2 Q31.6 22.8 31.4 26.2 L30.6 36.6 Q30.3 40 27 39.6 Q16.1 33.6 5.2 39.6 Q1.9 40 1.6 36.6 L0.8 26.2 Q0.6 22.8 4 22.8 Z" fill="url(#avvI)" stroke="#a07c4c" stroke-width=".5"/><rect x="11.6" y="18.5" width="8.9" height="5.2" fill="#cdaa78"/><path d="M8.1 5 Q8.1 0.5 12.6 0.5 H19.5 Q24 0.5 24 5 V12 Q24 17.6 20.6 19.8 Q16.1 21.2 11.5 19.8 Q8.1 17.6 8.1 12 Z" fill="url(#avhI)" stroke="#a07c4c" stroke-width=".5"/><path d="M16.4 19.8 V11 Q16.6 7.6 19.8 6.4" stroke="#b89462" stroke-width=".8" fill="none"/></svg><div class="abs" id="iname" style="left:886px;top:106px;font-size:12.5px;line-height:15px;white-space:nowrap;color:#111;letter-spacing:0.65px">AsianBoyAvatar</div><svg class="abs" style="left:1100px;top:106px" width="14" height="15" viewBox="0 0 14 15"><path d="M1 2.5 L10.5 0.8 L12.8 2 V13 L3 14.2 L1 13 Z" fill="#4a6ea8" stroke="#1f3a6a" stroke-width=".9"/><path d="M3 3.2 L11.8 2 V12.6 L3 13.6 Z" fill="#dfe9f7" stroke="#1f3a6a" stroke-width=".5"/><path d="M3.4 3.6 L11.4 2.5 V12.2 L3.4 13.2 Z" fill="#6d93cf"/><text x="5" y="11.2" font-family="Liberation Sans, sans-serif" font-size="8.5" font-weight="bold" fill="#fff">?</text></svg><svg class="abs" style="left:1118px;top:107px" width="15" height="13" viewBox="0 0 15 13"><g fill="#222"><circle cx="5.8" cy="5.8" r="3.6"/><g stroke="#222" stroke-width="2"><path d="M5.8 0.4 V11.2 M0.4 5.8 H11.2 M2 2 L9.6 9.6 M9.6 2 L2 9.6"/></g></g><circle cx="5.8" cy="5.8" r="1.7" fill="#dedede"/><path d="M10.8 8.6 h4 l-2 3z" fill="#222"/></svg><div class="abs" style="left:841px;top:144px;width:295px;height:561px;background:#c2c2c2"></div><div class="ibtn" style="left:845px;top:152px;width:143px;border-radius:3px 0 0 3px;background:linear-gradient(#5a5a5a,#6c6c6c);color:#e6e6e6;border-color:#3a3a3a"><span id="imap" style="letter-spacing:0.30px">Mapping</span></div><div class="ibtn" style="left:988px;top:152px;width:143px;border-radius:0 3px 3px 0;border-left:none"><span id="imus" style="letter-spacing:0.40px">Muscles &amp; Settings</span></div><div class="abs" style="left:845px;top:173px;width:286px;height:378px;background:#555555;overflow:hidden;box-shadow:inset 0 1px 2px rgba(0,0,0,.35)"><svg class="abs" style="left:0;top:0" width="286" height="378" viewBox="0 0 286 378"><path d="M170.2 178.0 C171.9 181.9 171.2 200.2 171.5 212.0 C171.8 223.8 171.9 236.0 171.7 248.5 C171.6 261.0 170.9 275.2 170.6 287.0 C170.3 298.8 170.2 311.0 169.8 319.1 C169.4 327.2 170.2 332.7 168.4 335.4 C166.6 338.1 160.7 338.1 158.9 335.4 C157.1 332.7 158.4 325.5 157.6 319.1 C156.9 312.7 155.2 303.3 154.4 297.0 C153.6 290.7 152.8 286.5 152.9 281.1 C153.0 275.7 154.9 271.3 154.8 264.8 C154.7 258.3 153.0 249.2 152.2 242.0 C151.4 234.8 151.1 229.1 150.2 221.3 C149.3 213.5 144.9 200.8 146.7 195.3 C148.5 189.9 157.3 191.5 161.2 188.6 C165.1 185.7 168.5 174.1 170.2 178.0 Z" fill="#2e4a2e" stroke="#1fe01f" stroke-width="1.25" stroke-linejoin="round"/><path d="M116.2 178.0 C114.5 181.9 115.2 200.2 114.9 212.0 C114.7 223.8 114.6 236.0 114.7 248.5 C114.9 261.0 115.5 275.2 115.8 287.0 C116.1 298.8 116.2 311.0 116.6 319.1 C117.0 327.2 116.2 332.7 118.0 335.4 C119.8 338.1 125.7 338.1 127.5 335.4 C129.3 332.7 128.1 325.5 128.8 319.1 C129.6 312.7 131.2 303.3 132.0 297.0 C132.8 290.7 133.6 286.5 133.5 281.1 C133.4 275.7 131.5 271.3 131.6 264.8 C131.7 258.3 133.4 249.2 134.2 242.0 C135.0 234.8 135.3 229.1 136.2 221.3 C137.1 213.5 141.5 200.8 139.7 195.3 C137.9 189.9 129.1 191.5 125.2 188.6 C121.3 185.7 117.9 174.1 116.2 178.0 Z" fill="#2e4a2e" stroke="#1fe01f" stroke-width="1.25" stroke-linejoin="round"/><path d="M158.4 338.5 C160.2 337.8 166.6 337.8 168.6 338.5 C170.6 339.2 169.0 340.6 170.2 343.0 C171.4 345.4 174.3 350.2 175.7 353.0 C177.1 355.8 178.4 358.1 178.6 360.0 C178.8 361.9 179.0 363.3 176.8 364.2 C174.6 365.1 168.8 365.6 165.2 365.6 C161.6 365.6 157.2 365.2 155.2 364.4 C153.2 363.5 153.1 362.7 153.2 360.5 C153.3 358.3 155.1 353.9 155.8 351.0 C156.5 348.1 157.2 345.1 157.6 343.0 C158.0 340.9 156.6 339.2 158.4 338.5 Z" fill="#2e4a2e" stroke="#1fe01f" stroke-width="1.25" stroke-linejoin="round"/><path d="M128.0 338.5 C126.2 337.8 119.8 337.8 117.8 338.5 C115.8 339.2 117.4 340.6 116.2 343.0 C115.0 345.4 112.1 350.2 110.7 353.0 C109.3 355.8 108.0 358.1 107.8 360.0 C107.6 361.9 107.4 363.3 109.6 364.2 C111.8 365.1 117.6 365.6 121.2 365.6 C124.8 365.6 129.2 365.2 131.2 364.4 C133.2 363.5 133.3 362.7 133.2 360.5 C133.1 358.3 131.3 353.9 130.6 351.0 C129.9 348.1 129.2 345.1 128.8 343.0 C128.4 340.9 129.8 339.2 128.0 338.5 Z" fill="#2e4a2e" stroke="#1fe01f" stroke-width="1.25" stroke-linejoin="round"/><path d="M155.5 65.4 C156.6 64.0 160.7 66.0 163.4 66.6 C166.1 67.2 169.6 67.7 171.7 68.8 C173.8 69.9 174.9 71.1 176.0 73.0 C177.1 74.9 177.4 77.3 178.2 80.0 C179.0 82.7 179.4 84.4 181.0 89.0 C182.6 93.6 185.5 100.9 187.9 107.7 C190.3 114.5 193.0 122.8 195.3 129.8 C197.5 136.8 199.6 143.3 201.4 149.5 C203.2 155.7 204.6 161.2 206.0 167.0 C207.4 172.8 210.1 180.9 209.6 184.0 C209.1 187.1 205.3 185.5 203.2 185.5 C201.1 185.5 198.5 186.2 196.8 183.9 C195.1 181.6 194.3 175.6 192.8 171.6 C191.3 167.6 189.3 163.7 187.7 160.0 C186.1 156.3 185.2 154.5 183.0 149.5 C180.8 144.5 176.8 136.4 174.4 129.8 C172.0 123.2 169.7 114.8 168.5 110.1 C167.3 105.4 167.5 102.9 167.0 101.5 C166.5 100.1 166.2 103.0 165.3 101.6 C164.4 100.2 162.9 96.0 161.7 93.0 C160.5 90.0 158.9 86.5 158.1 83.5 C157.3 80.5 157.1 78.0 156.7 75.0 C156.3 72.0 154.4 66.8 155.5 65.4 Z" fill="#2e4a2e" stroke="#1fe01f" stroke-width="1.25" stroke-linejoin="round"/><path d="M130.9 65.4 C129.8 64.0 125.7 66.0 123.0 66.6 C120.3 67.2 116.8 67.7 114.7 68.8 C112.6 69.9 111.5 71.1 110.4 73.0 C109.3 74.9 109.0 77.3 108.2 80.0 C107.4 82.7 107.0 84.4 105.4 89.0 C103.8 93.6 100.9 100.9 98.5 107.7 C96.1 114.5 93.4 122.8 91.1 129.8 C88.9 136.8 86.8 143.3 85.0 149.5 C83.2 155.7 81.8 161.2 80.4 167.0 C79.0 172.8 76.3 180.9 76.8 184.0 C77.3 187.1 81.1 185.5 83.2 185.5 C85.3 185.5 87.9 186.2 89.6 183.9 C91.3 181.6 92.1 175.6 93.6 171.6 C95.1 167.6 97.1 163.7 98.7 160.0 C100.3 156.3 101.2 154.5 103.4 149.5 C105.6 144.5 109.6 136.4 112.0 129.8 C114.4 123.2 116.7 114.8 117.9 110.1 C119.1 105.4 118.9 102.9 119.4 101.5 C119.9 100.1 120.2 103.0 121.1 101.6 C122.0 100.2 123.5 96.0 124.7 93.0 C125.9 90.0 127.5 86.5 128.3 83.5 C129.1 80.5 129.3 78.0 129.7 75.0 C130.1 72.0 132.0 66.8 130.9 65.4 Z" fill="#2e4a2e" stroke="#1fe01f" stroke-width="1.25" stroke-linejoin="round"/><path d="M196.4 185.5 C198.7 184.2 207.4 184.2 210.0 185.5 C212.6 186.8 211.5 190.4 211.8 193.0 C212.1 195.6 212.0 198.3 211.6 201.0 C211.2 203.7 210.3 206.9 209.4 209.0 C208.5 211.1 207.3 213.1 206.4 213.4 C205.5 213.6 204.3 212.2 203.8 210.5 C203.3 208.8 203.6 204.9 203.2 203.0 C202.8 201.1 202.1 199.1 201.6 198.8 C201.1 198.6 200.8 201.4 200.2 201.5 C199.6 201.6 198.5 200.9 197.8 199.5 C197.1 198.1 196.3 195.3 196.1 193.0 C195.9 190.7 194.1 186.8 196.4 185.5 Z" fill="#2e4a2e" stroke="#1fe01f" stroke-width="1.25" stroke-linejoin="round"/><path d="M90.0 185.5 C87.7 184.2 79.0 184.2 76.4 185.5 C73.8 186.8 74.9 190.4 74.6 193.0 C74.3 195.6 74.4 198.3 74.8 201.0 C75.2 203.7 76.1 206.9 77.0 209.0 C77.9 211.1 79.1 213.1 80.0 213.4 C80.9 213.6 82.1 212.2 82.6 210.5 C83.1 208.8 82.8 204.9 83.2 203.0 C83.6 201.1 84.3 199.1 84.8 198.8 C85.3 198.6 85.6 201.4 86.2 201.5 C86.8 201.6 87.9 200.9 88.6 199.5 C89.3 198.1 90.1 195.3 90.3 193.0 C90.5 190.7 92.3 186.8 90.0 185.5 Z" fill="#2e4a2e" stroke="#1fe01f" stroke-width="1.25" stroke-linejoin="round"/><path d="M151.1 63.6 C154.5 63.9 154.6 63.5 155.5 65.4 C156.4 67.3 156.3 72.0 156.7 75.0 C157.1 78.0 157.3 80.5 158.1 83.5 C158.9 86.5 160.5 90.0 161.7 93.0 C162.9 96.0 164.5 98.8 165.3 101.6 C166.1 104.4 166.0 104.9 166.3 110.0 C166.6 115.1 166.9 125.0 167.2 132.0 C167.5 139.0 167.5 144.4 168.0 152.0 C168.5 159.6 171.1 171.7 170.0 177.7 C168.9 183.7 164.9 185.4 161.2 188.2 C157.5 191.0 150.7 193.3 147.7 194.3 C144.7 195.3 144.7 194.3 143.2 194.3 C141.7 194.3 141.7 195.3 138.7 194.3 C135.7 193.3 128.9 191.0 125.2 188.2 C121.5 185.4 117.5 183.7 116.4 177.7 C115.3 171.7 117.9 159.6 118.4 152.0 C118.9 144.4 118.9 139.0 119.2 132.0 C119.5 125.0 119.8 115.1 120.1 110.0 C120.4 104.9 120.3 104.4 121.1 101.6 C121.9 98.8 123.5 96.0 124.7 93.0 C125.9 90.0 127.5 86.5 128.3 83.5 C129.1 80.5 129.3 78.0 129.7 75.0 C130.1 72.0 130.0 67.3 130.9 65.4 C131.8 63.5 131.9 63.9 135.3 63.6 C138.7 63.3 147.7 63.3 151.1 63.6 Z" fill="#2e4a2e" stroke="#1fe01f" stroke-width="1.25" stroke-linejoin="round"/><path d="M143.2 11.3 C145.5 11.3 148.2 11.4 150.2 12.6 C152.2 13.8 154.1 16.1 155.4 18.5 C156.7 20.9 157.3 24.8 157.8 27.0 C158.3 29.2 158.0 30.8 158.4 32.0 C158.9 33.2 160.3 32.9 160.5 34.5 C160.7 36.1 160.3 39.7 159.6 41.5 C158.9 43.3 157.3 43.6 156.4 45.2 C155.5 46.8 154.7 49.1 154.0 51.0 C153.3 52.9 152.5 54.5 152.0 56.5 C151.5 58.5 151.9 61.4 151.1 63.2 C150.3 65.0 148.5 66.4 147.2 67.5 C145.9 68.6 144.5 69.6 143.2 69.6 C141.9 69.6 140.5 68.6 139.2 67.5 C137.9 66.4 136.1 65.0 135.3 63.2 C134.5 61.4 134.9 58.5 134.4 56.5 C133.9 54.5 133.1 52.9 132.4 51.0 C131.7 49.1 130.9 46.8 130.0 45.2 C129.1 43.6 127.5 43.3 126.8 41.5 C126.1 39.7 125.7 36.1 125.9 34.5 C126.1 32.9 127.6 33.2 128.0 32.0 C128.4 30.8 128.1 29.2 128.6 27.0 C129.1 24.8 129.7 20.9 131.0 18.5 C132.3 16.1 134.2 13.8 136.2 12.6 C138.2 11.4 140.9 11.3 143.2 11.3 Z" fill="#2e4a2e" stroke="#1fe01f" stroke-width="1.25" stroke-linejoin="round"/><circle cx="143.2" cy="45.5" r="6.7" fill="#2e4a2e" stroke="#1fe01f" stroke-width="1.5"/><circle cx="143.2" cy="45.5" r="3.8" fill="#1fe01f"/><circle cx="115.9" cy="81.1" r="6.7" fill="#2e4a2e" stroke="#1fe01f" stroke-width="1.5"/><circle cx="115.9" cy="81.1" r="3.8" fill="#1fe01f"/><circle cx="170.2" cy="81.1" r="6.7" fill="#2e4a2e" stroke="#1fe01f" stroke-width="1.5"/><circle cx="170.2" cy="81.1" r="3.8" fill="#1fe01f"/><circle cx="143.2" cy="151.2" r="6.7" fill="#2e4a2e" stroke="#1fe01f" stroke-width="1.5"/><circle cx="143.2" cy="151.2" r="3.8" fill="#1fe01f"/><circle cx="143.2" cy="173.2" r="6.7" fill="#2e4a2e" stroke="#1fe01f" stroke-width="1.5"/><circle cx="143.2" cy="173.2" r="3.8" fill="#1fe01f"/><circle cx="99.4" cy="132.3" r="6.7" fill="#2e4a2e" stroke="#1fe01f" stroke-width="1.5"/><circle cx="99.4" cy="132.3" r="3.8" fill="#1fe01f"/><circle cx="186.2" cy="132.3" r="6.7" fill="#2e4a2e" stroke="#1fe01f" stroke-width="1.5"/><circle cx="186.2" cy="132.3" r="3.8" fill="#1fe01f"/><circle cx="83.4" cy="183.4" r="6.7" fill="#2e4a2e" stroke="#1fe01f" stroke-width="1.5"/><circle cx="83.4" cy="183.4" r="3.8" fill="#1fe01f"/><circle cx="202.1" cy="183.4" r="6.7" fill="#2e4a2e" stroke="#1fe01f" stroke-width="1.5"/><circle cx="202.1" cy="183.4" r="3.8" fill="#1fe01f"/><circle cx="128.4" cy="186.4" r="6.7" fill="#2e4a2e" stroke="#1fe01f" stroke-width="1.5"/><circle cx="128.4" cy="186.4" r="3.8" fill="#1fe01f"/><circle cx="157.4" cy="186.4" r="6.7" fill="#2e4a2e" stroke="#1fe01f" stroke-width="1.5"/><circle cx="157.4" cy="186.4" r="3.8" fill="#1fe01f"/><circle cx="124.2" cy="264.3" r="6.7" fill="#2e4a2e" stroke="#1fe01f" stroke-width="1.5"/><circle cx="124.2" cy="264.3" r="3.8" fill="#1fe01f"/><circle cx="161.4" cy="264.3" r="6.7" fill="#2e4a2e" stroke="#1fe01f" stroke-width="1.5"/><circle cx="161.4" cy="264.3" r="3.8" fill="#1fe01f"/><circle cx="122.6" cy="340.0" r="6.7" fill="#2e4a2e" stroke="#1fe01f" stroke-width="1.5"/><circle cx="122.6" cy="340.0" r="3.8" fill="#1fe01f"/><circle cx="163.3" cy="340.0" r="6.7" fill="#2e4a2e" stroke="#1fe01f" stroke-width="1.5"/><circle cx="163.3" cy="340.0" r="3.8" fill="#1fe01f"/><circle cx="143.2" cy="64.5" r="6.7" fill="none" stroke="#1fe01f" stroke-width="1.5" stroke-dasharray="2.5 1.7"/><circle cx="143.2" cy="64.5" r="3.6" fill="#1fe01f"/><circle cx="130.1" cy="75.0" r="6.7" fill="none" stroke="#1fe01f" stroke-width="1.5" stroke-dasharray="2.5 1.7"/><circle cx="130.1" cy="75.0" r="3.6" fill="#1fe01f"/><circle cx="155.4" cy="75.0" r="6.7" fill="none" stroke="#1fe01f" stroke-width="1.5" stroke-dasharray="2.5 1.7"/><circle cx="155.4" cy="75.0" r="3.6" fill="#1fe01f"/><circle cx="143.2" cy="94.7" r="6.7" fill="none" stroke="#1fe01f" stroke-width="1.5" stroke-dasharray="2.5 1.7"/><circle cx="143.2" cy="94.7" r="3.6" fill="#1fe01f"/><circle cx="143.2" cy="122.4" r="6.7" fill="none" stroke="#1fe01f" stroke-width="1.5" stroke-dasharray="2.5 1.7"/><circle cx="143.2" cy="122.4" r="3.6" fill="#1fe01f"/><circle cx="120.7" cy="357.2" r="6.7" fill="none" stroke="#1fe01f" stroke-width="1.5" stroke-dasharray="2.5 1.7"/><circle cx="120.7" cy="357.2" r="3.6" fill="#1fe01f"/><circle cx="165.5" cy="357.2" r="6.7" fill="none" stroke="#1fe01f" stroke-width="1.5" stroke-dasharray="2.5 1.7"/><circle cx="165.5" cy="357.2" r="3.6" fill="#1fe01f"/></svg></div><div class="sbtn" style="top:482.6px;background:linear-gradient(#5a5a5a,#6e6e6e);color:#e8e8e8">Body</div><div class="sbtn" style="top:498.7px">Head</div><div class="sbtn" style="top:514.8px">Left Hand</div><div class="sbtn" style="top:530.9px">Right Hand</div><!--/INSP-->
<!--INSP2--><div class="abs" style="left:845px;top:551px;width:271px;height:80px;background:#dedede;overflow:hidden"><svg class="abs" style="left:7px;top:4px" width="14" height="14" viewBox="0 0 14 14"><circle cx="7" cy="7" r="5.6" fill="none" stroke="#9a9a9a" stroke-width="1.1" stroke-dasharray="2.2 1.5"/></svg><div class="irow" id="iopt" style="left:30.6px;top:3px;letter-spacing:0.72px">Optional Bone</div><div class="ar" style="left:7px;top:26.5px"></div><div class="irow" id="ibody" style="left:18.3px;top:23.5px;letter-spacing:0.68px">Body</div><svg class="abs" style="left:21.0px;top:41.7px" width="15" height="15" viewBox="0 0 15 15"><circle cx="7.5" cy="7.5" r="6.3" fill="#e8f6e8" stroke="#14b414" stroke-width="1.5"/><circle cx="7.5" cy="7.5" r="3.7" fill="#14b414"/></svg><div class="irow" style="left:40.4px;top:41.7px;letter-spacing:0.22px">Hips</div><div class="abs" style="left:143px;top:41.7px;width:106px;height:15px;border:1px solid #8a8a8a;background:#e4e4e4;overflow:hidden;box-shadow:inset 0 1px 0 #c4c4c4"><div class="irow" style="left:15.5px;top:0px;letter-spacing:0.88px">pelvis (Transform)</div></div><svg class="abs" style="left:146.0px;top:43.7px" width="11" height="11" viewBox="0 0 11 11"><path d="M5.5 5.8 V0.8" stroke="#58b848" stroke-width="1.3"/><path d="M5.5 5.8 L1 9.6" stroke="#4a90d8" stroke-width="1.3"/><path d="M5.5 5.8 L10 9.6" stroke="#d85040" stroke-width="1.3"/></svg><svg class="abs" style="left:256.3px;top:44.9px" width="9" height="9" viewBox="0 0 9 9"><circle cx="4.5" cy="4.5" r="3.6" fill="none" stroke="#333" stroke-width="1"/><circle cx="4.5" cy="4.5" r="1.2" fill="#333"/></svg><svg class="abs" style="left:21.0px;top:59.7px" width="15" height="15" viewBox="0 0 15 15"><circle cx="7.5" cy="7.5" r="6.3" fill="#e8f6e8" stroke="#14b414" stroke-width="1.5"/><circle cx="7.5" cy="7.5" r="3.7" fill="#14b414"/></svg><div class="irow" style="left:40.4px;top:59.7px;letter-spacing:0.63px">Spine</div><div class="abs" style="left:143px;top:59.7px;width:106px;height:15px;border:1px solid #8a8a8a;background:#e4e4e4;overflow:hidden;box-shadow:inset 0 1px 0 #c4c4c4"><div class="irow" style="left:15.5px;top:0px;letter-spacing:0.76px">spine_01 (Transform)</div></div><svg class="abs" style="left:146.0px;top:61.7px" width="11" height="11" viewBox="0 0 11 11"><path d="M5.5 5.8 V0.8" stroke="#58b848" stroke-width="1.3"/><path d="M5.5 5.8 L1 9.6" stroke="#4a90d8" stroke-width="1.3"/><path d="M5.5 5.8 L10 9.6" stroke="#d85040" stroke-width="1.3"/></svg><svg class="abs" style="left:256.3px;top:62.9px" width="9" height="9" viewBox="0 0 9 9"><circle cx="4.5" cy="4.5" r="3.6" fill="none" stroke="#333" stroke-width="1"/><circle cx="4.5" cy="4.5" r="1.2" fill="#333"/></svg><svg class="abs" style="left:21.0px;top:77.7px" width="15" height="15" viewBox="0 0 15 15"><circle cx="7.5" cy="7.5" r="6.3" fill="#e8f6e8" stroke="#14b414" stroke-width="1.5"/><circle cx="7.5" cy="7.5" r="3.7" fill="#14b414"/></svg><div class="abs" style="left:143px;top:77.7px;width:106px;height:15px;border:1px solid #8a8a8a;background:#e4e4e4"></div></div><div class="abs" style="left:1116px;top:551px;width:15px;height:80px;background:linear-gradient(90deg,#cdcdcd,#e6e6e6 50%,#d2d2d2)"></div><div class="abs" style="left:1119.5px;top:557px;width:0;height:0;border-left:4px solid transparent;border-right:4px solid transparent;border-bottom:6px solid #333"></div><div class="abs" style="left:1117px;top:569px;width:13px;height:45px;border-radius:7px;background:linear-gradient(90deg,#d6d6d6,#f2f2f2 50%,#dcdcdc);border:1px solid #bcbcbc"></div><div class="abs" style="left:1117px;top:569px;width:13px;height:21px;border-radius:6px;background:linear-gradient(90deg,#a4b4cc,#8397b5 45%,#62789a);border:1px solid #4e607c"></div><div class="abs" style="left:1119.5px;top:619px;width:0;height:0;border-left:4px solid transparent;border-right:4px solid transparent;border-top:6px solid #333"></div><div class="tbar" style="left:845px;top:631px;width:286px;height:18px;border-left:1px solid #6d6d6d;border-right:1px solid #6d6d6d"></div><div class="vsep" style="left:851px;top:632px;height:16px"></div><div class="bt" id="imapb" style="left:857.6px;top:634px;font-size:9.8px;-webkit-text-stroke:.25px #111;letter-spacing:0.47px">Mapping</div><div class="dd" style="left:903px;top:638px;border-left-width:2.5px;border-right-width:2.5px;border-top-width:3.5px;border-top-color:#444"></div><div class="vsep" style="left:911px;top:632px;height:16px"></div><div class="bt" id="iposeb" style="left:917px;top:634px;font-size:9.8px;-webkit-text-stroke:.25px #111;letter-spacing:0.57px">Pose</div><div class="dd" style="left:946px;top:638px;border-left-width:2.5px;border-right-width:2.5px;border-top-width:3.5px;border-top-color:#444"></div><div class="vsep" style="left:954px;top:632px;height:16px"></div><div class="ibtn" style="left:987.0px;top:658px;width:50.0px;height:18px;border-radius:3px;color:#777;border-color:#8a8a8a"><span style="letter-spacing:0.44px">Revert</span></div><div class="ibtn" style="left:1041.0px;top:658px;width:44.0px;height:18px;border-radius:3px;color:#777;border-color:#8a8a8a"><span style="letter-spacing:0.35px">Apply</span></div><div class="ibtn" style="left:1089.0px;top:658px;width:42.0px;height:18px;border-radius:3px;color:#111;border-color:#5a5a5a"><span style="letter-spacing:0.25px">Done</span></div><div class="abs" style="left:845px;top:687px;width:286px;height:1px;background:#8e8e8e"></div><div class="ar" style="left:851px;top:693.5px"></div><svg class="abs" style="left:862px;top:689px" width="15" height="15" viewBox="0 0 15 15"><path d="M7.5 8 V1" stroke="#3fc43a" stroke-width="1.8"/><path d="M7.5 8 L1.2 13.2" stroke="#3a7ee0" stroke-width="1.8"/><path d="M7.5 8 L13.8 13.2" stroke="#e0362a" stroke-width="1.8"/></svg><div class="irow" id="itrans" style="left:895.2px;top:690.5px;font-weight:bold;font-size:11.5px;letter-spacing:1.25px">Transform</div><svg class="abs" style="left:1098px;top:689.5px" width="14" height="15" viewBox="0 0 14 15"><path d="M1 2.5 L10.5 0.8 L12.8 2 V13 L3 14.2 L1 13 Z" fill="#4a6ea8" stroke="#1f3a6a" stroke-width=".9"/><path d="M3.4 3.6 L11.4 2.5 V12.2 L3.4 13.2 Z" fill="#6d93cf"/><text x="5" y="11.2" font-family="Liberation Sans, sans-serif" font-size="8.5" font-weight="bold" fill="#fff">?</text></svg><svg class="abs" style="left:1116px;top:690.5px" width="15" height="13" viewBox="0 0 15 13"><g fill="#222"><circle cx="5.8" cy="5.8" r="3.6"/><g stroke="#222" stroke-width="2"><path d="M5.8 0.4 V11.2 M0.4 5.8 H11.2 M2 2 L9.6 9.6 M9.6 2 L2 9.6"/></g></g><circle cx="5.8" cy="5.8" r="1.7" fill="#c2c2c2"/><path d="M10.8 8.6 h4 l-2 3z" fill="#222"/></svg><div class="abs" style="left:1136px;top:101px;width:13px;height:604px;background:linear-gradient(90deg,#bcbcbc,#d6d6d6 50%,#c4c4c4)"></div><div class="abs" style="left:1136px;top:101px;width:13px;height:16px;background:linear-gradient(#e2e2e2,#cecece)"></div><div class="abs" style="left:1139px;top:106px;width:0;height:0;border-left:3.5px solid transparent;border-right:3.5px solid transparent;border-bottom:5.5px solid #333"></div><div class="abs" style="left:1136.5px;top:117px;width:12.5px;height:567px;border-radius:6.5px;background:linear-gradient(90deg,#d4d4d4,#f0f0f0 50%,#dadada);border:1px solid #b6b6b6"></div><div class="abs" style="left:1136.5px;top:117px;width:12.5px;height:511px;border-radius:6.5px;background:linear-gradient(90deg,#9fb0c8,#8094b2 45%,#5f7595);border:1px solid #4e607c"></div><div class="abs" style="left:1139px;top:693px;width:0;height:0;border-left:3.5px solid transparent;border-right:3.5px solid transparent;border-top:5.5px solid #333"></div><div class="abs" style="left:841px;top:704px;width:308px;height:17px;background:linear-gradient(#646464,#3a3a3a);border-top:1px solid #7a7a7a"></div><div class="irow" id="ialab" style="left:845.4px;top:706px;font-weight:bold;font-size:11.5px;color:#e2e2e2;letter-spacing:0.85px">Asset Labels</div><div class="abs" style="left:841px;top:721px;width:308px;height:27px;background:#2d2d2d"></div><svg class="abs" style="left:1124.5px;top:726.5px" width="21" height="17" viewBox="0 0 21 17"><ellipse cx="10.5" cy="8.5" rx="10.3" ry="8" fill="#2e62c0"/><path d="M5.6 3.6 L9.8 3.2 L15.2 9 L11.4 12.8 L5.6 7.4 Z" fill="#fff"/><circle cx="7.7" cy="5.4" r="1" fill="#2e62c0"/></svg><svg class="abs" style="left:0;top:0;z-index:40;pointer-events:none" width="1152" height="200" viewBox="0 0 1152 200"><rect x="220.4" y="78.5" width="58" height="25.7" rx="6" ry="6" fill="none" stroke="#ed1c24" stroke-width="5"/><rect x="849.4" y="145.8" width="132.3" height="32.6" rx="13" ry="11" fill="none" stroke="#ed1c24" stroke-width="5.2"/></svg><!--/INSP2-->
  </div>
  <!-- desktop frame -->
  <div class="abs" style="left:0;top:0;width:1152px;height:2px;background:linear-gradient(90deg,#02122f,#03173a 60%,#06245a);z-index:50"></div>
  <div class="abs" style="left:0;top:0;width:2px;height:773px;background:#02132f;z-index:50"></div>
  <div class="abs" style="left:0;top:771px;width:1152px;height:2px;background:linear-gradient(90deg,#02122f 0%,#03193e 40%,#0a4a90 62%,#1666c4 100%);z-index:50"></div>
  <div class="abs" style="left:1150px;top:0;width:2px;height:773px;background:linear-gradient(#04122e 0%,#04122e 27%,#0a4f98 40%,#0b5aa8 60%,#1666c4 100%);z-index:50"></div>
</div>
</body>
</html>
